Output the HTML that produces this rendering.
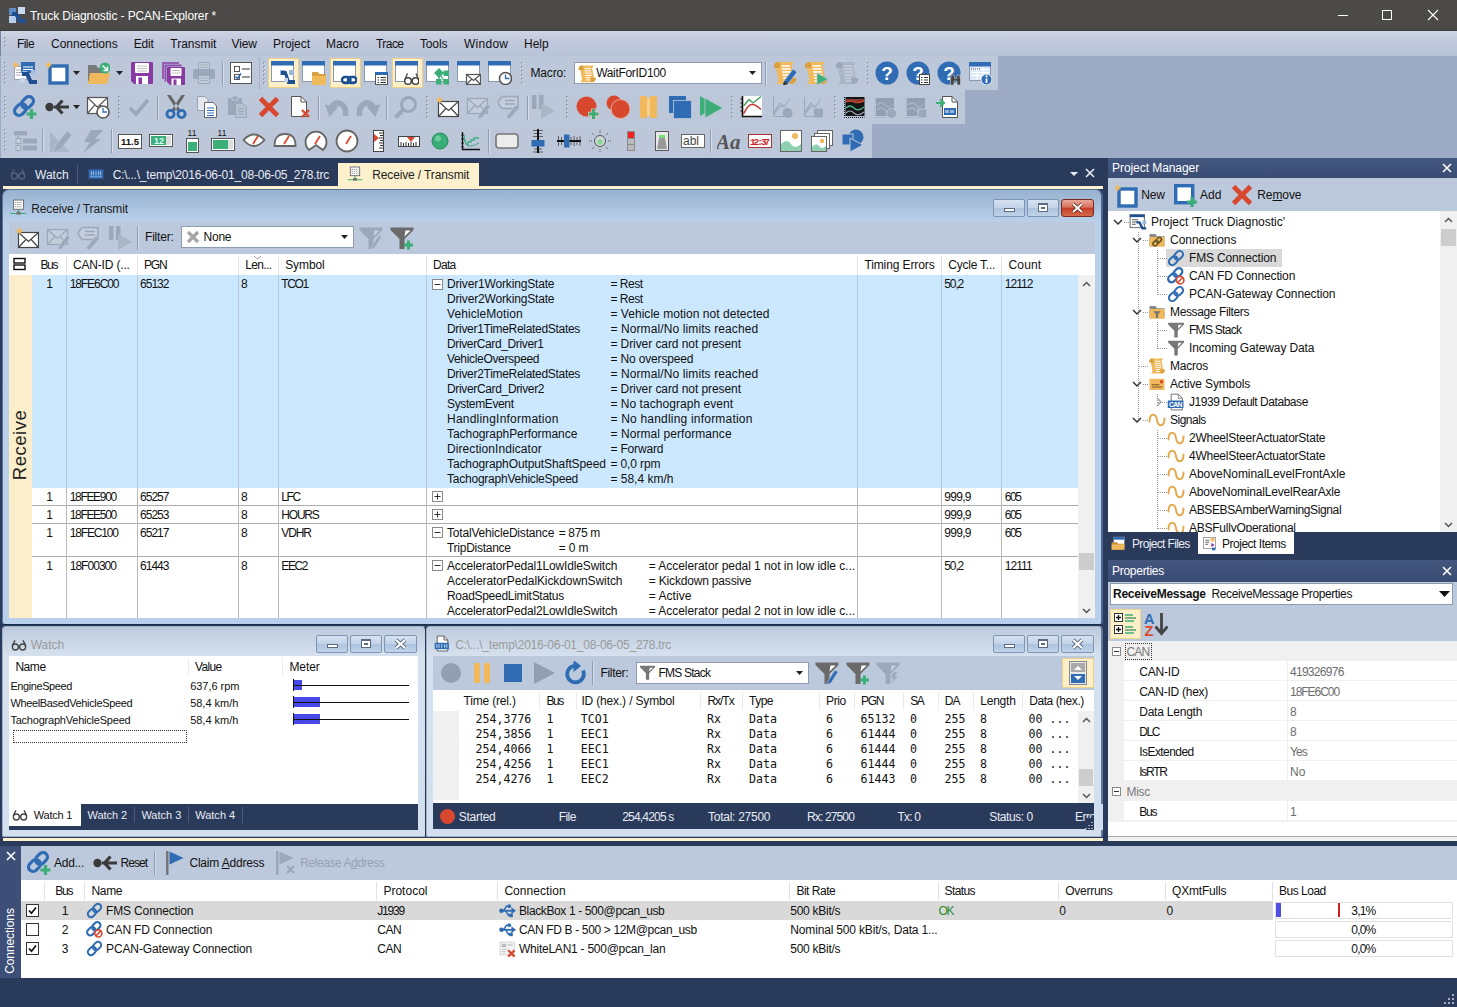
<!DOCTYPE html>
<html lang="en"><head><meta charset="utf-8"><title>Truck Diagnostic - PCAN-Explorer</title>
<style>
html,body{margin:0;padding:0}
body{width:1457px;height:1007px;overflow:hidden;position:relative;background:#2a3a5b;font-family:"Liberation Sans",sans-serif;font-size:12px;color:#111}
#app{position:absolute;left:0;top:0;width:1457px;height:1007px;overflow:hidden}
#app div,#app span,#app svg{position:absolute}
.t{white-space:pre;line-height:14px;font-size:12px}
.m{white-space:pre;line-height:14px;font-size:11.6px;font-family:"DejaVu Sans Mono","Liberation Mono",monospace}
u{text-decoration:underline}
</style></head>
<body><div id="app">
<div style="left:0px;top:0px;width:1457px;height:31px;background:linear-gradient(#4b4a48 0px,#4b4a48 27px,#404142 31px)"></div><svg style="left:9px;top:7px;" width="17" height="17" viewBox="0 0 17 17"><rect x="0" y="1" width="7" height="7" fill="#5f8cc9"/><rect x="9" y="0" width="7" height="7" fill="#c9d9f0"/><rect x="0" y="9" width="7" height="7" fill="#b9cdea"/><path d="M3 5H8L12 12H17V16H10L6 9H3Z" fill="#1d4f91"/></svg><span class="t" style="left:30.1px;top:9px;letter-spacing:-0.106px;color:#fff;">Truck Diagnostic - PCAN-Explorer *</span><svg style="left:1337px;top:9px;" width="12" height="12" viewBox="0 0 12 12"><path d="M1 6.5H11" stroke="#fff" stroke-width="1"/></svg><svg style="left:1381px;top:9px;" width="12" height="12" viewBox="0 0 12 12"><rect x="1.5" y="1.5" width="9" height="9" fill="none" stroke="#fff" stroke-width="1"/></svg><svg style="left:1427px;top:9px;" width="12" height="12" viewBox="0 0 12 12"><path d="M1 1L11 11M11 1L1 11" stroke="#fff" stroke-width="1.1"/></svg>
<div style="left:0px;top:31px;width:1457px;height:25px;background:linear-gradient(#cdd4e2 0%,#c3c9dd 40%,#b7c3d7 100%)"></div><div style="left:0px;top:31px;width:1px;height:127px;background:#7686a3"></div><svg style="left:4px;top:37px;" width="3" height="12" viewBox="0 0 3 12"><rect x="0" y="0" width="2" height="2" fill="#8d9bb3"/><rect x="1" y="1" width="1" height="1" fill="#e8eef6"/><rect x="0" y="4" width="2" height="2" fill="#8d9bb3"/><rect x="1" y="5" width="1" height="1" fill="#e8eef6"/><rect x="0" y="8" width="2" height="2" fill="#8d9bb3"/><rect x="1" y="9" width="1" height="1" fill="#e8eef6"/></svg><span class="t" style="left:17px;top:37px;letter-spacing:-0.578px;">File</span><span class="t" style="left:51px;top:37px;letter-spacing:-0.001px;">Connections</span><span class="t" style="left:133.7px;top:37px;letter-spacing:-0.193px;">Edit</span><span class="t" style="left:170.3px;top:37px;letter-spacing:-0.018px;">Transmit</span><span class="t" style="left:231.5px;top:37px;letter-spacing:-0.097px;">View</span><span class="t" style="left:273px;top:37px;letter-spacing:-0.058px;">Project</span><span class="t" style="left:326px;top:37px;letter-spacing:-0.085px;">Macro</span><span class="t" style="left:376px;top:37px;letter-spacing:-0.557px;">Trace</span><span class="t" style="left:420px;top:37px;letter-spacing:-0.153px;">Tools</span><span class="t" style="left:464px;top:37px;letter-spacing:0.264px;">Window</span><span class="t" style="left:524px;top:37px;letter-spacing:-0.026px;">Help</span>
<div style="left:0px;top:56px;width:1457px;height:102px;background:#9dabc5"></div><div style="left:1px;top:56px;width:997px;height:34px;background:#bcc7d9"></div><div style="left:1px;top:90px;width:964px;height:34px;background:linear-gradient(#c6d0e0 0px,#bcc7d9 1px)"></div><div style="left:1px;top:124px;width:871px;height:34px;background:linear-gradient(#c6d0e0 0px,#bcc7d9 1px)"></div><svg style="left:4px;top:62px;" width="3" height="24" viewBox="0 0 3 24"><rect x="0" y="0" width="2" height="2" fill="#8d9bb3"/><rect x="1" y="1" width="1" height="1" fill="#e8eef6"/><rect x="0" y="4" width="2" height="2" fill="#8d9bb3"/><rect x="1" y="5" width="1" height="1" fill="#e8eef6"/><rect x="0" y="8" width="2" height="2" fill="#8d9bb3"/><rect x="1" y="9" width="1" height="1" fill="#e8eef6"/><rect x="0" y="12" width="2" height="2" fill="#8d9bb3"/><rect x="1" y="13" width="1" height="1" fill="#e8eef6"/><rect x="0" y="16" width="2" height="2" fill="#8d9bb3"/><rect x="1" y="17" width="1" height="1" fill="#e8eef6"/><rect x="0" y="20" width="2" height="2" fill="#8d9bb3"/><rect x="1" y="21" width="1" height="1" fill="#e8eef6"/></svg><svg style="left:13px;top:61px;" width="24" height="24" viewBox="0 0 24 24"><rect x="1.500" y="5.500" width="12" height="13" fill="#fff" stroke="#9aa6b8"/><path d="M3 9H11M3 11.500H11M3 14H11" stroke="#99a" stroke-width=".800"/><rect x="8" y="1" width="14" height="11" fill="#2f6cb3"/><path d="M10 6H20M10 8.500H20" stroke="#fff" stroke-width="1.100"/><rect x="9" y="10" width="5" height="5" fill="#a9bfdf"/><rect x="18" y="9" width="5" height="5" fill="#a9bfdf"/><rect x="7" y="17" width="5" height="5" fill="#c5d4ea"/><path d="M9 11H15.500L19 19H24V23H16.500L13 15H9Z" fill="#1d4f91"/><circle cx="2.5" cy="4" r="2.300" fill="#f0b95c"/><path d="M-1.0 4H6.0M2.5 0.5V7.5" stroke="#f0b95c" stroke-width="1.200" opacity=".8"/></svg><svg style="left:46px;top:61px;" width="24" height="24" viewBox="0 0 24 24"><rect x="4" y="5" width="17" height="17" fill="#fff" stroke="#2f6cb3" stroke-width="3.400"/><circle cx="2.5" cy="4" r="2.300" fill="#f0b95c"/><path d="M-1.0 4H6.0M2.5 0.5V7.5" stroke="#f0b95c" stroke-width="1.200" opacity=".8"/></svg><svg style="left:86px;top:61px;" width="24" height="24" viewBox="0 0 24 24"><path d="M2 4H10L12 7H17V20H2Z" fill="#7a7a7a"/><path d="M4 12H24L21 23H2Z" fill="#f0b95c"/><circle cx="19" cy="7" r="5.500" fill="#3cae78"/><path d="M16.500 4.500L21 9M21.500 5.500V9.500H17.500" stroke="#fff" stroke-width="1.500" fill="none"/></svg><svg style="left:130px;top:61px;" width="24" height="24" viewBox="0 0 24 24"><path d="M1 2Q1 1 2 1H22Q23 1 23 2V22Q23 23 22 23H4L1 20Z" fill="#8a3aa3"/><rect x="5" y="2" width="14" height="10" rx="1" fill="#fff"/><path d="M7 5H17M7 7.500H17M7 10H17" stroke="#b9b9b9" stroke-width=".900"/><rect x="6" y="15" width="12" height="8" fill="#fff"/><rect x="8.500" y="16.500" width="3.500" height="6.500" fill="#8a3aa3"/></svg><svg style="left:161px;top:61px;" width="24" height="24" viewBox="0 0 24 24"><path d="M1 1H18V3H3V18H1Z" fill="#8a3aa3" opacity=".75"/><path d="M3.500 3.500H20.500V5.500H5.500V20.500H3.500Z" fill="#8a3aa3" opacity=".85"/><path d="M6 7Q6 6 7 6H23Q24 6 24 7V23Q24 24 23 24H9L6 21Z" fill="#8a3aa3"/><rect x="9.500" y="7" width="11" height="8" rx="1" fill="#fff"/><path d="M11 9.500H19M11 12H19" stroke="#b9b9b9" stroke-width=".900"/><rect x="10.500" y="17.500" width="9.500" height="6.500" fill="#fff"/><rect x="12.500" y="18.500" width="3" height="5.500" fill="#8a3aa3"/></svg><svg style="left:192px;top:61px;" width="24" height="24" viewBox="0 0 24 24"><rect x="6.500" y="1.500" width="11" height="8" fill="#c3ccda" stroke="#9ba8bb"/><path d="M8 4H16M8 6.500H16" stroke="#9ba8bb" stroke-width=".800"/><rect x="1" y="8" width="22" height="10" rx="2" fill="#9ba8bb"/><rect x="6.500" y="14.500" width="11" height="8" fill="#c3ccda" stroke="#9ba8bb"/><path d="M8 17H16M8 19.500H16" stroke="#9ba8bb" stroke-width=".800"/></svg><svg style="left:229px;top:61px;" width="24" height="24" viewBox="0 0 24 24"><rect x="1.500" y="1.500" width="21" height="21" fill="#fff" stroke="#555"/><rect x="5.500" y="5.500" width="5" height="5" fill="#fff" stroke="#555"/><path d="M13 8H21M13 16H21" stroke="#333" stroke-width="1.100"/><rect x="5.500" y="13.500" width="5" height="5" fill="#fff" stroke="#555"/><path d="M6.500 15.500L8.500 17.500L12 12.500" stroke="#2f6cb3" stroke-width="1.500" fill="none"/></svg><svg style="left:73px;top:71px;" width="7" height="4" viewBox="0 0 7 4"><path d="M0 0H7L3.5 4Z" fill="#222"/></svg><svg style="left:116px;top:71px;" width="7" height="4" viewBox="0 0 7 4"><path d="M0 0H7L3.5 4Z" fill="#222"/></svg><div style="left:222px;top:62px;width:1px;height:24px;background:#8f9db4"></div><div style="left:223px;top:62px;width:1px;height:24px;background:#d5dde9"></div><div style="left:259px;top:57px;width:1px;height:33px;background:#a5b2c8"></div><svg style="left:263px;top:62px;" width="3" height="24" viewBox="0 0 3 24"><rect x="0" y="0" width="2" height="2" fill="#8d9bb3"/><rect x="1" y="1" width="1" height="1" fill="#e8eef6"/><rect x="0" y="4" width="2" height="2" fill="#8d9bb3"/><rect x="1" y="5" width="1" height="1" fill="#e8eef6"/><rect x="0" y="8" width="2" height="2" fill="#8d9bb3"/><rect x="1" y="9" width="1" height="1" fill="#e8eef6"/><rect x="0" y="12" width="2" height="2" fill="#8d9bb3"/><rect x="1" y="13" width="1" height="1" fill="#e8eef6"/><rect x="0" y="16" width="2" height="2" fill="#8d9bb3"/><rect x="1" y="17" width="1" height="1" fill="#e8eef6"/><rect x="0" y="20" width="2" height="2" fill="#8d9bb3"/><rect x="1" y="21" width="1" height="1" fill="#e8eef6"/></svg><div style="left:268px;top:58px;width:31px;height:30px;background:#fdf0c8;border:1px solid #ecd08a;box-sizing:border-box"></div><svg style="left:271px;top:61px;" width="24" height="24" viewBox="0 0 24 24"><rect x="0.500" y="0.500" width="22" height="20" fill="#fff" stroke="#8a98ae"/><rect x="0" y="0" width="23" height="4.500" fill="#2f6cb3"/><rect x="9" y="9" width="5" height="5" fill="#9db5d8"/><path d="M10 10H15.500L18.500 19H24V23H16.500L13.500 14H10Z" fill="#1d4f91"/><rect x="18" y="9" width="5" height="5" fill="#9db5d8"/><rect x="13" y="17" width="4" height="4" fill="#c5d4ea"/></svg><svg style="left:302px;top:61px;" width="24" height="24" viewBox="0 0 24 24"><rect x="0.500" y="0.500" width="22" height="20" fill="#fff" stroke="#8a98ae"/><rect x="0" y="0" width="23" height="4.500" fill="#2f6cb3"/><path d="M10 11H16L17.500 13H24V24H10Z" fill="#d9a247"/><path d="M10 15H24V24H10Z" fill="#f0b95c"/></svg><div style="left:330px;top:58px;width:31px;height:30px;background:#fdf0c8;border:1px solid #ecd08a;box-sizing:border-box"></div><svg style="left:333px;top:61px;" width="24" height="24" viewBox="0 0 24 24"><rect x="0.500" y="0.500" width="22" height="20" fill="#fff" stroke="#8a98ae"/><rect x="0" y="0" width="23" height="4.500" fill="#2f6cb3"/><g fill="none" stroke="#1d4f91" stroke-width="2.400"><rect x="9" y="16" width="8.500" height="6" rx="3"/><rect x="15" y="16" width="8.500" height="6" rx="3"/></g></svg><svg style="left:364px;top:61px;" width="24" height="24" viewBox="0 0 24 24"><rect x="0.500" y="0.500" width="22" height="20" fill="#fff" stroke="#8a98ae"/><rect x="0" y="0" width="23" height="4.500" fill="#2f6cb3"/><rect x="11.500" y="11.500" width="12" height="12" fill="#fff" stroke="#555"/><rect x="11" y="11" width="13" height="3" fill="#2f6cb3"/><path d="M13.500 16.500H15M16.500 16.500H22M13.500 19H15M16.500 19H22M13.500 21.500H15M16.500 21.500H22" stroke="#333" stroke-width="1.200"/></svg><div style="left:392px;top:58px;width:31px;height:30px;background:#fdf0c8;border:1px solid #ecd08a;box-sizing:border-box"></div><svg style="left:395px;top:61px;" width="24" height="24" viewBox="0 0 24 24"><rect x="0.500" y="0.500" width="22" height="20" fill="#fff" stroke="#8a98ae"/><rect x="0" y="0" width="23" height="4.500" fill="#2f6cb3"/><circle cx="13" cy="20" r="3.300" fill="#fff" stroke="#444" stroke-width="1.500"/><circle cx="20.500" cy="20" r="3.300" fill="#fff" stroke="#444" stroke-width="1.500"/><path d="M10 18.500L12.500 12.500M23.500 18.500L21 12.500M16.200 19.500H17.300" stroke="#444" stroke-width="1.300" fill="none"/></svg><svg style="left:426px;top:61px;" width="24" height="24" viewBox="0 0 24 24"><rect x="0.500" y="0.500" width="22" height="20" fill="#fff" stroke="#8a98ae"/><rect x="0" y="0" width="23" height="4.500" fill="#2f6cb3"/><path d="M13 12V21M13 12L19 21M13 12H20" stroke="#3cae78" stroke-width="1.300"/><rect x="9.500" y="8.500" width="7" height="7" fill="#3cae78" transform="rotate(45 13 12)"/><rect x="17.500" y="9.500" width="5.500" height="5.500" fill="#3cae78"/><rect x="17.500" y="18" width="5.500" height="5.500" fill="#3cae78"/><rect x="10" y="18" width="5.500" height="5.500" fill="#3cae78"/></svg><svg style="left:457px;top:61px;" width="24" height="24" viewBox="0 0 24 24"><rect x="0.500" y="0.500" width="22" height="20" fill="#fff" stroke="#8a98ae"/><rect x="0" y="0" width="23" height="4.500" fill="#2f6cb3"/><rect x="9.5" y="13.5" width="14" height="10" fill="#fff" stroke="#555" stroke-width="1.2"/><path d="M9.5 13.5L16.5 19.5L23.5 13.5M9.5 23.5L14.82 18.0M23.5 23.5L18.18 18.0" fill="none" stroke="#555" stroke-width="1.2"/></svg><svg style="left:488px;top:61px;" width="24" height="24" viewBox="0 0 24 24"><rect x="0.500" y="0.500" width="22" height="20" fill="#fff" stroke="#8a98ae"/><rect x="0" y="0" width="23" height="4.500" fill="#2f6cb3"/><circle cx="17.5" cy="17.5" r="6" fill="#fff" stroke="#555" stroke-width="1.6"/><path d="M17.5 13.5V17.5H21.5" fill="none" stroke="#2f6cb3" stroke-width="1.3"/></svg><svg style="left:521px;top:62px;" width="3" height="24" viewBox="0 0 3 24"><rect x="0" y="0" width="2" height="2" fill="#8d9bb3"/><rect x="1" y="1" width="1" height="1" fill="#e8eef6"/><rect x="0" y="4" width="2" height="2" fill="#8d9bb3"/><rect x="1" y="5" width="1" height="1" fill="#e8eef6"/><rect x="0" y="8" width="2" height="2" fill="#8d9bb3"/><rect x="1" y="9" width="1" height="1" fill="#e8eef6"/><rect x="0" y="12" width="2" height="2" fill="#8d9bb3"/><rect x="1" y="13" width="1" height="1" fill="#e8eef6"/><rect x="0" y="16" width="2" height="2" fill="#8d9bb3"/><rect x="1" y="17" width="1" height="1" fill="#e8eef6"/><rect x="0" y="20" width="2" height="2" fill="#8d9bb3"/><rect x="1" y="21" width="1" height="1" fill="#e8eef6"/></svg><span class="t" style="left:530.5px;top:66px;letter-spacing:-0.175px;">Macro:</span><div style="left:574px;top:62px;width:188px;height:22px;background:#fff;border:1px solid #8e9bb0;box-sizing:border-box"></div><svg style="left:578px;top:64px;" width="24" height="24" viewBox="0 0 24 24"><g transform="scale(.760) translate(0,1)"><path d="M5 1H21Q18 3.500 19 7L21 17H23Q24 23 18 23H3Q6 20.500 5 17L3 7H1Q0 1 5 1Z" fill="#f0b95c"/><path d="M5 1Q8 2 7 7H1Q0 2 5 1ZM18 23Q16 22 17 17H23Q24 22 18 23Z" fill="#d9a040"/><path d="M8.500 5H17M8.500 8H17.500M9 11H18M9.500 14H18.500M10 17H16M10.500 20H16" stroke="#fff" stroke-width="1.300"/></g></svg><span class="t" style="left:596.2px;top:66px;letter-spacing:-0.316px;">WaitForID100</span><svg style="left:749px;top:71px;" width="7" height="4" viewBox="0 0 7 4"><path d="M0 0H7L3.5 4Z" fill="#222"/></svg><div style="left:765px;top:62px;width:1px;height:24px;background:#8f9db4"></div><div style="left:766px;top:62px;width:1px;height:24px;background:#d5dde9"></div><svg style="left:773px;top:61px;" width="24" height="24" viewBox="0 0 24 24"><path d="M5 1H21Q18 3.500 19 7L21 17H23Q24 23 18 23H3Q6 20.500 5 17L3 7H1Q0 1 5 1Z" fill="#f0b95c"/><path d="M5 1Q8 2 7 7H1Q0 2 5 1ZM18 23Q16 22 17 17H23Q24 22 18 23Z" fill="#d9a040"/><path d="M8.500 5H17M8.500 8H17.500M9 11H18M9.500 14H18.500M10 17H16M10.500 20H16" stroke="#fff" stroke-width="1.300"/><path d="M11 20L20 8L24 11L15 23L10 24.500Z" fill="#2f6cb3" stroke="#bcc8db" stroke-width=".700"/><path d="M10 24.500L11 20L15 23Z" fill="#333"/></svg><svg style="left:804px;top:61px;" width="24" height="24" viewBox="0 0 24 24"><path d="M5 1H21Q18 3.500 19 7L21 17H23Q24 23 18 23H3Q6 20.500 5 17L3 7H1Q0 1 5 1Z" fill="#f0b95c"/><path d="M5 1Q8 2 7 7H1Q0 2 5 1ZM18 23Q16 22 17 17H23Q24 22 18 23Z" fill="#d9a040"/><path d="M8.500 5H17M8.500 8H17.500M9 11H18M9.500 14H18.500M10 17H16M10.500 20H16" stroke="#fff" stroke-width="1.300"/><path d="M13 12L24 18L13 24Z" fill="#3cae78" stroke="#bcc8db" stroke-width=".700"/></svg><svg style="left:835px;top:61px;" width="24" height="24" viewBox="0 0 24 24"><path d="M5 1H21Q18 3.500 19 7L21 17H23Q24 23 18 23H3Q6 20.500 5 17L3 7H1Q0 1 5 1Z" fill="#aab5c6"/><path d="M5 1Q8 2 7 7H1Q0 2 5 1ZM18 23Q16 22 17 17H23Q24 22 18 23Z" fill="#9ba8bb"/><path d="M8.500 5H17M8.500 8H17.500M9 11H18M9.500 14H18.500M10 17H16M10.500 20H16" stroke="#c7d0de" stroke-width="1.300"/></svg><svg style="left:867px;top:62px;" width="3" height="24" viewBox="0 0 3 24"><rect x="0" y="0" width="2" height="2" fill="#8d9bb3"/><rect x="1" y="1" width="1" height="1" fill="#e8eef6"/><rect x="0" y="4" width="2" height="2" fill="#8d9bb3"/><rect x="1" y="5" width="1" height="1" fill="#e8eef6"/><rect x="0" y="8" width="2" height="2" fill="#8d9bb3"/><rect x="1" y="9" width="1" height="1" fill="#e8eef6"/><rect x="0" y="12" width="2" height="2" fill="#8d9bb3"/><rect x="1" y="13" width="1" height="1" fill="#e8eef6"/><rect x="0" y="16" width="2" height="2" fill="#8d9bb3"/><rect x="1" y="17" width="1" height="1" fill="#e8eef6"/><rect x="0" y="20" width="2" height="2" fill="#8d9bb3"/><rect x="1" y="21" width="1" height="1" fill="#e8eef6"/></svg><svg style="left:875px;top:61px;" width="24" height="24" viewBox="0 0 24 24"><circle cx="12" cy="12" r="11.500" fill="#2f6cb3"/><text x="12" y="19" font-family="Liberation Sans" font-weight="bold" font-size="19" fill="#fff" text-anchor="middle">?</text></svg><svg style="left:906px;top:61px;" width="24" height="24" viewBox="0 0 24 24"><circle cx="12" cy="12" r="11.500" fill="#2f6cb3"/><text x="12" y="19" font-family="Liberation Sans" font-weight="bold" font-size="19" fill="#fff" text-anchor="middle">?</text><rect x="13.500" y="13.500" width="10" height="10" fill="#fff" stroke="#444"/><path d="M15 16.500H16.500M18 16.500H22M15 19H16.500M18 19H22M15 21.500H16.500M18 21.500H22" stroke="#333"/></svg><svg style="left:937px;top:61px;" width="24" height="24" viewBox="0 0 24 24"><circle cx="12" cy="12" r="11.500" fill="#2f6cb3"/><text x="12" y="19" font-family="Liberation Sans" font-weight="bold" font-size="19" fill="#fff" text-anchor="middle">?</text><path d="M13.500 24V18L14.500 14H17L17.500 17.500H19.500L20 14H22.500L23.500 18V24H20V20H17V24Z" fill="#444" stroke="#ddd" stroke-width=".500"/></svg><svg style="left:968px;top:61px;" width="24" height="24" viewBox="0 0 24 24"><rect x="1.500" y="1.500" width="21" height="18" fill="#dce9f8" stroke="#8a98ae"/><rect x="1" y="1" width="22" height="4.500" fill="#2f6cb3"/><path d="M3 8.500H21M3 11.500H21M3 14.500H21M9 6V19M15 6V19" stroke="#fff"/><path d="M3 8H12" stroke="#556" stroke-dasharray="1 1"/><circle cx="18.500" cy="18.500" r="5.500" fill="#2f6cb3" stroke="#fff"/><path d="M18.500 17.500V22" stroke="#fff" stroke-width="1.800"/><circle cx="18.500" cy="15.300" r="1.100" fill="#fff"/></svg><svg style="left:4px;top:96px;" width="3" height="24" viewBox="0 0 3 24"><rect x="0" y="0" width="2" height="2" fill="#8d9bb3"/><rect x="1" y="1" width="1" height="1" fill="#e8eef6"/><rect x="0" y="4" width="2" height="2" fill="#8d9bb3"/><rect x="1" y="5" width="1" height="1" fill="#e8eef6"/><rect x="0" y="8" width="2" height="2" fill="#8d9bb3"/><rect x="1" y="9" width="1" height="1" fill="#e8eef6"/><rect x="0" y="12" width="2" height="2" fill="#8d9bb3"/><rect x="1" y="13" width="1" height="1" fill="#e8eef6"/><rect x="0" y="16" width="2" height="2" fill="#8d9bb3"/><rect x="1" y="17" width="1" height="1" fill="#e8eef6"/><rect x="0" y="20" width="2" height="2" fill="#8d9bb3"/><rect x="1" y="21" width="1" height="1" fill="#e8eef6"/></svg><svg style="left:13px;top:95px;" width="24" height="24" viewBox="0 0 24 24"><g transform="translate(-1,-1)"><g transform="rotate(-45 12 12)" fill="none" stroke="#2f6cb3" stroke-width="3.2"><rect x="0.500" y="7.500" width="13" height="9" rx="4.500"/><rect x="10.500" y="7.500" width="13" height="9" rx="4.500"/></g></g><path d="M13.5 19H23.5M18.5 14V24" stroke="#3cae78" stroke-width="3.2"/></svg><svg style="left:45px;top:95px;" width="24" height="24" viewBox="0 0 24 24"><circle cx="4.500" cy="12" r="4.200" fill="#3a3a3a"/><path d="M9 12H24M17.500 5.500L11.500 12L17.500 18.500" stroke="#3a3a3a" stroke-width="3.200" fill="none"/></svg><svg style="left:86px;top:95px;" width="24" height="24" viewBox="0 0 24 24"><rect x="1.5" y="2.5" width="20" height="16" fill="#fff" stroke="#555" stroke-width="1.2"/><path d="M1.5 2.5L11.5 12.1L21.5 2.5M1.5 18.5L9.1 9.7M21.5 18.5L13.9 9.7" fill="none" stroke="#555" stroke-width="1.2"/><circle cx="17" cy="17" r="6" fill="#fff" stroke="#555" stroke-width="1.6"/><path d="M17 13V17H21" fill="none" stroke="#2f6cb3" stroke-width="1.3"/></svg><svg style="left:73px;top:105px;" width="7" height="4" viewBox="0 0 7 4"><path d="M0 0H7L3.5 4Z" fill="#222"/></svg><svg style="left:118px;top:96px;" width="3" height="24" viewBox="0 0 3 24"><rect x="0" y="0" width="2" height="2" fill="#8d9bb3"/><rect x="1" y="1" width="1" height="1" fill="#e8eef6"/><rect x="0" y="4" width="2" height="2" fill="#8d9bb3"/><rect x="1" y="5" width="1" height="1" fill="#e8eef6"/><rect x="0" y="8" width="2" height="2" fill="#8d9bb3"/><rect x="1" y="9" width="1" height="1" fill="#e8eef6"/><rect x="0" y="12" width="2" height="2" fill="#8d9bb3"/><rect x="1" y="13" width="1" height="1" fill="#e8eef6"/><rect x="0" y="16" width="2" height="2" fill="#8d9bb3"/><rect x="1" y="17" width="1" height="1" fill="#e8eef6"/><rect x="0" y="20" width="2" height="2" fill="#8d9bb3"/><rect x="1" y="21" width="1" height="1" fill="#e8eef6"/></svg><svg style="left:127px;top:95px;" width="24" height="24" viewBox="0 0 24 24"><path d="M3 13L9 19L21 5" stroke="#9ba8bb" stroke-width="3.600" fill="none"/></svg><svg style="left:164px;top:95px;" width="24" height="24" viewBox="0 0 24 24"><path d="M3 0H6.500L16.500 15L13.500 16.500ZM21 0H17.500L7.500 15L10.500 16.500Z" fill="#666"/><circle cx="6.500" cy="19" r="3.600" fill="none" stroke="#2f6cb3" stroke-width="2.800"/><circle cx="17.500" cy="19" r="3.600" fill="none" stroke="#2f6cb3" stroke-width="2.800"/></svg><svg style="left:195px;top:95px;" width="24" height="24" viewBox="0 0 24 24"><path d="M2.5 1.5H10L13 4.5V15.500H2.5Z" fill="#e4e8ee" stroke="#9aa4b4"/><path d="M9.500 7.500H18L21.500 11V22.500H9.500Z" fill="#fff" stroke="#666"/><path d="M12 13H19M12 15.500H19M12 18H19M12 20.500H19" stroke="#2f6cb3" stroke-width="1.1"/></svg><svg style="left:226px;top:95px;" width="24" height="24" viewBox="0 0 24 24"><rect x="2" y="3" width="14" height="17" fill="#9ba8bb"/><rect x="6" y="1" width="6" height="4" fill="#9ba8bb" stroke="#bcc8db"/><path d="M9.500 8.500H17L20.500 12V22.500H9.500Z" fill="#b6c1d1" stroke="#9ba8bb"/><path d="M12 14H18M12 16.500H18M12 19H18" stroke="#9ba8bb"/></svg><svg style="left:257px;top:95px;" width="24" height="24" viewBox="0 0 24 24"><path d="M3.500 3.500L20.500 20.500M20.500 3.500L3.500 20.500" stroke="#d8482e" stroke-width="4.800"/></svg><svg style="left:288px;top:95px;" width="24" height="24" viewBox="0 0 24 24"><path d="M3.500 1.500H13L18.500 7V21.500H3.500Z" fill="#fff" stroke="#555"/><path d="M13 1.500V7H18.500" fill="none" stroke="#555"/><path d="M14 15L21 22M21 15L14 22" stroke="#d8482e" stroke-width="2.4"/></svg><svg style="left:325px;top:95px;" width="24" height="24" viewBox="0 0 24 24"><path d="M20.500 21C22 7 9.500 4.500 7 12" fill="none" stroke="#9ba8bb" stroke-width="5.500"/><path d="M0 9.500L13.500 11.500L4.500 22Z" fill="#9ba8bb"/></svg><svg style="left:356px;top:95px;" width="24" height="24" viewBox="0 0 24 24"><path d="M3.500 21C2 7 14.500 4.500 17 12" fill="none" stroke="#9ba8bb" stroke-width="5.500"/><path d="M24 9.500L10.500 11.500L19.500 22Z" fill="#9ba8bb"/></svg><svg style="left:393px;top:95px;" width="24" height="24" viewBox="0 0 24 24"><circle cx="15.500" cy="9.500" r="7" fill="none" stroke="#9ba8bb" stroke-width="3"/><path d="M10.500 14.500L2.500 22.500" stroke="#9ba8bb" stroke-width="4"/></svg><div style="left:157px;top:96px;width:1px;height:24px;background:#8f9db4"></div><div style="left:158px;top:96px;width:1px;height:24px;background:#d5dde9"></div><div style="left:318px;top:96px;width:1px;height:24px;background:#8f9db4"></div><div style="left:319px;top:96px;width:1px;height:24px;background:#d5dde9"></div><div style="left:386px;top:96px;width:1px;height:24px;background:#8f9db4"></div><div style="left:387px;top:96px;width:1px;height:24px;background:#d5dde9"></div><svg style="left:426px;top:96px;" width="3" height="24" viewBox="0 0 3 24"><rect x="0" y="0" width="2" height="2" fill="#8d9bb3"/><rect x="1" y="1" width="1" height="1" fill="#e8eef6"/><rect x="0" y="4" width="2" height="2" fill="#8d9bb3"/><rect x="1" y="5" width="1" height="1" fill="#e8eef6"/><rect x="0" y="8" width="2" height="2" fill="#8d9bb3"/><rect x="1" y="9" width="1" height="1" fill="#e8eef6"/><rect x="0" y="12" width="2" height="2" fill="#8d9bb3"/><rect x="1" y="13" width="1" height="1" fill="#e8eef6"/><rect x="0" y="16" width="2" height="2" fill="#8d9bb3"/><rect x="1" y="17" width="1" height="1" fill="#e8eef6"/><rect x="0" y="20" width="2" height="2" fill="#8d9bb3"/><rect x="1" y="21" width="1" height="1" fill="#e8eef6"/></svg><svg style="left:435px;top:95px;" width="24" height="24" viewBox="0 0 24 24"><rect x="3.5" y="6.5" width="20" height="15" fill="#fff" stroke="#444" stroke-width="1.2"/><path d="M3.5 6.5L13.5 15.5L23.5 6.5M3.5 21.5L11.1 13.25M23.5 21.5L15.9 13.25" fill="none" stroke="#444" stroke-width="1.2"/><circle cx="4.5" cy="5" r="2.300" fill="#f0b95c"/><path d="M1.0 5H8.0M4.5 1.5V8.5" stroke="#f0b95c" stroke-width="1.200" opacity=".8"/></svg><svg style="left:466px;top:95px;" width="24" height="24" viewBox="0 0 24 24"><rect x="1.5" y="3.5" width="20" height="15" fill="#c3cddc" stroke="#9ba8bb" stroke-width="1.2"/><path d="M1.5 3.5L11.5 12.5L21.5 3.5M1.5 18.5L9.1 10.25M21.5 18.5L13.9 10.25" fill="none" stroke="#9ba8bb" stroke-width="1.2"/><path d="M13 20L21 9L24 11.500L16 22.500L12 24Z" fill="#9ba8bb" stroke="#bcc8db" stroke-width=".600"/></svg><svg style="left:497px;top:95px;" width="24" height="24" viewBox="0 0 24 24"><path d="M1.500 6L5 1.500H21V13.500H5L1.500 9Z" fill="#c3cddc" stroke="#9ba8bb" stroke-width="1.600"/><path d="M8 5.500H18M8 9H18" stroke="#9ba8bb" stroke-width="1.300"/><path d="M9 22L19 10L22.500 12.500L12.500 24Z" fill="#9ba8bb" stroke="#bcc8db" stroke-width=".600"/></svg><svg style="left:531px;top:95px;" width="24" height="24" viewBox="0 0 24 24"><rect x="1" y="0" width="4.500" height="14" fill="#9ba8bb"/><rect x="8" y="0" width="4.500" height="14" fill="#9ba8bb"/><path d="M10 8L24 16L10 24Z" fill="#aab5c6"/></svg><div style="left:527px;top:96px;width:1px;height:24px;background:#8f9db4"></div><div style="left:528px;top:96px;width:1px;height:24px;background:#d5dde9"></div><svg style="left:566px;top:96px;" width="3" height="24" viewBox="0 0 3 24"><rect x="0" y="0" width="2" height="2" fill="#8d9bb3"/><rect x="1" y="1" width="1" height="1" fill="#e8eef6"/><rect x="0" y="4" width="2" height="2" fill="#8d9bb3"/><rect x="1" y="5" width="1" height="1" fill="#e8eef6"/><rect x="0" y="8" width="2" height="2" fill="#8d9bb3"/><rect x="1" y="9" width="1" height="1" fill="#e8eef6"/><rect x="0" y="12" width="2" height="2" fill="#8d9bb3"/><rect x="1" y="13" width="1" height="1" fill="#e8eef6"/><rect x="0" y="16" width="2" height="2" fill="#8d9bb3"/><rect x="1" y="17" width="1" height="1" fill="#e8eef6"/><rect x="0" y="20" width="2" height="2" fill="#8d9bb3"/><rect x="1" y="21" width="1" height="1" fill="#e8eef6"/></svg><svg style="left:575px;top:95px;" width="24" height="24" viewBox="0 0 24 24"><circle cx="11.500" cy="11.500" r="10" fill="#d8482e"/><path d="M13 19H24M18.500 13.500V24.500" stroke="#f3c9bf" stroke-width="4.600"/><path d="M13.5 19H23.5M18.5 14V24" stroke="#3cae78" stroke-width="3.2"/></svg><svg style="left:606px;top:95px;" width="24" height="24" viewBox="0 0 24 24"><circle cx="8" cy="8" r="7.500" fill="#d8482e"/><circle cx="14.500" cy="14" r="9.500" fill="#d8482e" stroke="#eab3a6" stroke-width=".900"/></svg><svg style="left:637px;top:95px;" width="24" height="24" viewBox="0 0 24 24"><rect x="3" y="1" width="7" height="22" rx="1" fill="#f0b95c"/><rect x="13" y="1" width="7" height="22" rx="1" fill="#f0b95c"/><rect x="10" y="3" width="3" height="18" fill="#f5cf8d"/></svg><svg style="left:668px;top:95px;" width="24" height="24" viewBox="0 0 24 24"><rect x="1" y="1" width="17" height="17" fill="#2f6cb3"/><rect x="5.500" y="5.500" width="18" height="18" fill="#2f6cb3" stroke="#bcc8db" stroke-width=".800"/></svg><svg style="left:699px;top:95px;" width="24" height="24" viewBox="0 0 24 24"><path d="M1 1L18 11L1 21Z" fill="#3cae78"/><path d="M6 3L24 13L6 23Z" fill="#3cae78" stroke="#bcc8db" stroke-width=".800"/></svg><svg style="left:731px;top:96px;" width="3" height="24" viewBox="0 0 3 24"><rect x="0" y="0" width="2" height="2" fill="#8d9bb3"/><rect x="1" y="1" width="1" height="1" fill="#e8eef6"/><rect x="0" y="4" width="2" height="2" fill="#8d9bb3"/><rect x="1" y="5" width="1" height="1" fill="#e8eef6"/><rect x="0" y="8" width="2" height="2" fill="#8d9bb3"/><rect x="1" y="9" width="1" height="1" fill="#e8eef6"/><rect x="0" y="12" width="2" height="2" fill="#8d9bb3"/><rect x="1" y="13" width="1" height="1" fill="#e8eef6"/><rect x="0" y="16" width="2" height="2" fill="#8d9bb3"/><rect x="1" y="17" width="1" height="1" fill="#e8eef6"/><rect x="0" y="20" width="2" height="2" fill="#8d9bb3"/><rect x="1" y="21" width="1" height="1" fill="#e8eef6"/></svg><svg style="left:739px;top:95px;" width="24" height="24" viewBox="0 0 24 24"><rect x="3" y="1" width="20" height="20" fill="#fff"/><path d="M3.500 1V21.500H23" fill="none" stroke="#111" stroke-width="1.600"/><path d="M1.500 4H4M1.500 8H4M1.500 12H4M1.500 16H4" stroke="#111"/><path d="M4.500 11L10 4.500L14 8L22 1.500" fill="none" stroke="#3a9a55" stroke-width="1.300"/><path d="M4.500 19Q9 9.500 13 9.500Q17 9.500 22 14.500" fill="none" stroke="#c9403a" stroke-width="1.700"/></svg><svg style="left:770px;top:95px;" width="24" height="24" viewBox="0 0 24 24"><path d="M3.500 2V21.500H22" fill="none" stroke="#9ba8bb"/><path d="M4 17L10 8L14 12L20 4M4 20Q9 10 13 11" fill="none" stroke="#9ba8bb" stroke-width="1.100"/><circle cx="17.500" cy="18" r="5" fill="#9ba8bb"/></svg><svg style="left:801px;top:95px;" width="24" height="24" viewBox="0 0 24 24"><path d="M3.500 2V21.500H22" fill="none" stroke="#9ba8bb"/><path d="M4 17L10 8L14 12L20 4M4 20Q9 10 13 11" fill="none" stroke="#9ba8bb" stroke-width="1.100"/><rect x="13" y="13.500" width="9" height="9" fill="#9ba8bb"/></svg><svg style="left:834px;top:96px;" width="3" height="24" viewBox="0 0 3 24"><rect x="0" y="0" width="2" height="2" fill="#8d9bb3"/><rect x="1" y="1" width="1" height="1" fill="#e8eef6"/><rect x="0" y="4" width="2" height="2" fill="#8d9bb3"/><rect x="1" y="5" width="1" height="1" fill="#e8eef6"/><rect x="0" y="8" width="2" height="2" fill="#8d9bb3"/><rect x="1" y="9" width="1" height="1" fill="#e8eef6"/><rect x="0" y="12" width="2" height="2" fill="#8d9bb3"/><rect x="1" y="13" width="1" height="1" fill="#e8eef6"/><rect x="0" y="16" width="2" height="2" fill="#8d9bb3"/><rect x="1" y="17" width="1" height="1" fill="#e8eef6"/><rect x="0" y="20" width="2" height="2" fill="#8d9bb3"/><rect x="1" y="21" width="1" height="1" fill="#e8eef6"/></svg><svg style="left:842px;top:95px;" width="24" height="24" viewBox="0 0 24 24"><rect x="3.500" y="2" width="19" height="19" fill="#151515"/><path d="M2.500 2V22.500H22.500" fill="none" stroke="#111" stroke-dasharray="1 1"/><path d="M4 5.500H22" stroke="#8a3a30" stroke-width="3"/><path d="M4 7Q8 5 12 7T22 6" fill="none" stroke="#d8482e" stroke-width="1.100"/><path d="M4 13Q8 9 12 13T22 12" fill="none" stroke="#4dbb8a" stroke-width="1.200"/><path d="M4 18Q8 14 12 18T22 17" fill="none" stroke="#9ab" stroke-width="1.100"/></svg><svg style="left:873px;top:95px;" width="24" height="24" viewBox="0 0 24 24"><rect x="3" y="3" width="18" height="18" fill="#929eb2"/><path d="M4 10Q8 6 12 10T20 9M4 15Q8 11 12 15T20 14" fill="none" stroke="#a9b4c5" stroke-width="1.200"/><path d="M2 2V22.500H22" fill="none" stroke="#9ba8bb" stroke-dasharray="1 1"/><circle cx="18.500" cy="18.500" r="5" fill="#9ba8bb" stroke="#bcc8db"/></svg><svg style="left:904px;top:95px;" width="24" height="24" viewBox="0 0 24 24"><rect x="3" y="3" width="18" height="18" fill="#929eb2"/><path d="M4 10Q8 6 12 10T20 9M4 15Q8 11 12 15T20 14" fill="none" stroke="#a9b4c5" stroke-width="1.200"/><path d="M2 2V22.500H22" fill="none" stroke="#9ba8bb" stroke-dasharray="1 1"/><rect x="14" y="14" width="9" height="9" fill="#9ba8bb" stroke="#bcc8db"/></svg><svg style="left:935px;top:95px;" width="24" height="24" viewBox="0 0 24 24"><path d="M7.500 1.500H17L22.500 7V22.500H7.500Z" fill="#fff" stroke="#555"/><path d="M17 1.500V7H22.500" fill="none" stroke="#555"/><rect x="9" y="13" width="12" height="7" fill="#2f6cb3"/><path d="M11 15V18M13 15V18M16 15V18M18 15V18" stroke="#fff"/><path d="M1 8H8M5 4.500L9 8L5 11.500" stroke="#3cae78" stroke-width="2.2" fill="none"/></svg><svg style="left:4px;top:129px;" width="3" height="24" viewBox="0 0 3 24"><rect x="0" y="0" width="2" height="2" fill="#8d9bb3"/><rect x="1" y="1" width="1" height="1" fill="#e8eef6"/><rect x="0" y="4" width="2" height="2" fill="#8d9bb3"/><rect x="1" y="5" width="1" height="1" fill="#e8eef6"/><rect x="0" y="8" width="2" height="2" fill="#8d9bb3"/><rect x="1" y="9" width="1" height="1" fill="#e8eef6"/><rect x="0" y="12" width="2" height="2" fill="#8d9bb3"/><rect x="1" y="13" width="1" height="1" fill="#e8eef6"/><rect x="0" y="16" width="2" height="2" fill="#8d9bb3"/><rect x="1" y="17" width="1" height="1" fill="#e8eef6"/><rect x="0" y="20" width="2" height="2" fill="#8d9bb3"/><rect x="1" y="21" width="1" height="1" fill="#e8eef6"/></svg><svg style="left:13px;top:129px;" width="24" height="24" viewBox="0 0 24 24"><rect x="1" y="2" width="13" height="4.500" fill="#9ba8bb"/><path d="M5 6V19H8M5 12H8" stroke="#9ba8bb" fill="none" stroke-width="1.200"/><rect x="3" y="9.500" width="5" height="5" fill="#c3cddc" stroke="#9ba8bb"/><rect x="3" y="16.500" width="5" height="5" fill="#c3cddc" stroke="#9ba8bb"/><rect x="10" y="9.500" width="14" height="5" fill="#9ba8bb"/><rect x="10" y="16.500" width="14" height="5" fill="#9ba8bb"/></svg><div style="left:42px;top:129px;width:1px;height:24px;background:#8f9db4"></div><div style="left:43px;top:129px;width:1px;height:24px;background:#d5dde9"></div><svg style="left:49px;top:129px;" width="24" height="24" viewBox="0 0 24 24"><path d="M1 3V23H21Z" fill="#aab5c7"/><path d="M6 17L18 2L23 6L11 21L4 23.500Z" fill="#9ba8bb" stroke="#bcc8db" stroke-width=".800"/></svg><svg style="left:80px;top:129px;" width="24" height="24" viewBox="0 0 24 24"><path d="M11 1H23L15 10H21L3 24L10 13H4Z" fill="#9ba8bb"/></svg><div style="left:111px;top:129px;width:1px;height:24px;background:#8f9db4"></div><div style="left:112px;top:129px;width:1px;height:24px;background:#d5dde9"></div><svg style="left:118px;top:129px;" width="24" height="24" viewBox="0 0 24 24"><rect x="0.500" y="5.500" width="23" height="14" fill="#fff" stroke="#555"/><text x="12" y="16" font-family="Liberation Sans" font-weight="bold" font-size="9.500" text-anchor="middle" fill="#111">11.5</text></svg><svg style="left:149px;top:129px;" width="24" height="24" viewBox="0 0 24 24"><rect x="0.500" y="5.500" width="23" height="12" fill="#fff" stroke="#555"/><rect x="2" y="7" width="15" height="9" fill="#3cae78"/><rect x="17" y="7" width="5" height="9" fill="#ddd"/><text x="10" y="15" font-family="Liberation Sans" font-weight="bold" font-size="9" text-anchor="middle" fill="#dff">12</text></svg><svg style="left:180px;top:129px;" width="24" height="24" viewBox="0 0 24 24"><text x="12" y="7" font-family="Liberation Sans" font-size="8.500" text-anchor="middle" fill="#111">11</text><rect x="6.500" y="9.500" width="12" height="14" fill="#fff" stroke="#555"/><rect x="8" y="13" width="9" height="9" fill="#3cae78"/></svg><svg style="left:211px;top:129px;" width="24" height="24" viewBox="0 0 24 24"><text x="11" y="7" font-family="Liberation Sans" font-size="8.500" text-anchor="middle" fill="#111">11</text><rect x="0.500" y="9.500" width="23" height="12" fill="#fff" stroke="#555"/><rect x="2" y="11" width="15" height="9" fill="#3cae78"/><rect x="17" y="11" width="5" height="9" fill="#ddd"/></svg><svg style="left:242px;top:129px;" width="24" height="24" viewBox="0 0 24 24"><path d="M1.500 11Q12 0 22.500 11Q12 23 1.500 11Z" fill="#fff" stroke="#666" stroke-width="1.8"/><path d="M11 15L16 7" stroke="#d8482e" stroke-width="1.8"/></svg><svg style="left:273px;top:129px;" width="24" height="24" viewBox="0 0 24 24"><path d="M1.500 17Q1.500 5 12 5Q22.500 5 22.500 17Z" fill="#fff" stroke="#666" stroke-width="1.8"/><path d="M11 15L16 7" stroke="#d8482e" stroke-width="1.8"/></svg><svg style="left:304px;top:129px;" width="24" height="24" viewBox="0 0 24 24"><path d="M5 21A10.500 10.500 0 1 1 19 21L12 16Z" fill="#fff" stroke="#666" stroke-width="1.800"/><path d="M11 15L16 7" stroke="#d8482e" stroke-width="1.8"/></svg><svg style="left:335px;top:129px;" width="24" height="24" viewBox="0 0 24 24"><circle cx="12" cy="12" r="10.500" fill="#fff" stroke="#666" stroke-width="1.8"/><path d="M11 15L16 7" stroke="#d8482e" stroke-width="1.8"/></svg><svg style="left:366px;top:129px;" width="24" height="24" viewBox="0 0 24 24"><rect x="7.500" y="1.500" width="10" height="21" fill="#fff" stroke="#444"/><path d="M13 4H17M14 6.500H17M13 9H17M14 11.500H17M13 14H17M14 16.500H17M13 19H17" stroke="#333"/><path d="M8 5L13 9L8 13Z" fill="#d8482e"/></svg><svg style="left:397px;top:129px;" width="24" height="24" viewBox="0 0 24 24"><rect x="1.500" y="7.500" width="21" height="10" fill="#fff" stroke="#444"/><path d="M4 13V17M6.500 14V17M9 13V17M11.500 14V17M14 13V17M16.500 14V17M19 13V17" stroke="#333"/><path d="M10 8L14 13L18 8Z" fill="#d8482e"/></svg><svg style="left:428px;top:129px;" width="24" height="24" viewBox="0 0 24 24"><circle cx="12" cy="12" r="8" fill="#3cae78" stroke="#2a8a5c"/><circle cx="10" cy="9.500" r="3" fill="#7fd9ae" opacity=".7"/></svg><svg style="left:459px;top:129px;" width="24" height="24" viewBox="0 0 24 24"><path d="M3.500 3V20.500H21" fill="none" stroke="#111" stroke-width="1.3"/><path d="M5 6Q6 16 9 16V13H12V11H15V9H20" fill="none" stroke="#3cae78" stroke-width="1.3"/><path d="M5 9Q7 18 12 17T20 14" fill="none" stroke="#4a8" stroke-width="1"/><path d="M2 6H5M2 10H5M2 14H5M2 18H5" stroke="#111" stroke-width=".8"/></svg><div style="left:488px;top:129px;width:1px;height:24px;background:#8f9db4"></div><div style="left:489px;top:129px;width:1px;height:24px;background:#d5dde9"></div><svg style="left:495px;top:129px;" width="24" height="24" viewBox="0 0 24 24"><rect x="1" y="5" width="22" height="14" rx="3" fill="#ececec" stroke="#777" stroke-width="1.6"/></svg><svg style="left:526px;top:129px;" width="24" height="24" viewBox="0 0 24 24"><path d="M7 1.500H17M8 4.500H16M7 7.500H17M8 20H16M7 23H17" stroke="#555" stroke-width=".900"/><path d="M12 0V24" stroke="#111" stroke-width="2"/><rect x="5.500" y="11" width="13" height="6.500" fill="#2f6cb3"/></svg><svg style="left:557px;top:129px;" width="24" height="24" viewBox="0 0 24 24"><path d="M1.500 7V17M4.500 8V16M14 8V16M17 7V17M20 8V16M23 7V17" stroke="#555" stroke-width=".900"/><path d="M0 12H24" stroke="#111" stroke-width="2"/><rect x="7" y="5.500" width="5.500" height="13" fill="#2f6cb3"/></svg><svg style="left:588px;top:129px;" width="24" height="24" viewBox="0 0 24 24"><circle cx="12" cy="12" r="5.500" fill="#cfd4d8" stroke="#555"/><circle cx="12" cy="13" r="2.500" fill="#7fd98a"/><path d="M12 1V4M12 20V23M1 12H4M20 12H23M4 4L6.500 6.500M20 4L17.500 6.500M4 20L6.500 17.500M20 20L17.500 17.500" stroke="#555" stroke-dasharray="1 1"/></svg><svg style="left:619px;top:129px;" width="24" height="24" viewBox="0 0 24 24"><rect x="8" y="2" width="8" height="20" fill="#8c8c8c"/><rect x="9" y="3" width="6" height="6" fill="#e22"/><rect x="9" y="10" width="6" height="5" fill="#bbb"/><rect x="9" y="16" width="6" height="5" fill="#bbb"/></svg><svg style="left:650px;top:129px;" width="24" height="24" viewBox="0 0 24 24"><rect x="5.500" y="2.500" width="13" height="19" fill="#e8e8e8" stroke="#555"/><path d="M7 20L9 9H15L17 20Z" fill="#999"/><rect x="9" y="6" width="6" height="3" fill="#7d7"/></svg><svg style="left:681px;top:129px;" width="24" height="24" viewBox="0 0 24 24"><rect x="0.500" y="5.500" width="23" height="13" fill="#fff" stroke="#666"/><text x="2" y="16" font-family="Liberation Sans" font-size="12" fill="#444">abl</text></svg><div style="left:710px;top:129px;width:1px;height:24px;background:#8f9db4"></div><div style="left:711px;top:129px;width:1px;height:24px;background:#d5dde9"></div><svg style="left:717px;top:129px;" width="24" height="24" viewBox="0 0 24 24"><text x="-1" y="20" font-family="Liberation Serif" font-style="italic" font-weight="bold" font-size="21" fill="#555">Aa</text></svg><svg style="left:748px;top:129px;" width="24" height="24" viewBox="0 0 24 24"><rect x="0.500" y="5.500" width="23" height="13" fill="#fff" stroke="#a33"/><text x="12" y="16" font-family="Liberation Mono" font-weight="bold" font-size="9.500" text-anchor="middle" fill="#c22" textLength="20">12:37</text></svg><svg style="left:779px;top:129px;" width="24" height="24" viewBox="0 0 24 24"><rect x="1.500" y="1.500" width="21" height="21" fill="#fff" stroke="#666"/><circle cx="16" cy="7" r="3" fill="#f0b95c"/><path d="M2 15Q8 9 12 15T22 15V22H2Z" fill="#8fd0b0"/></svg><svg style="left:810px;top:129px;" width="24" height="24" viewBox="0 0 24 24"><rect x="7.500" y="1.500" width="15" height="15" fill="#fff" stroke="#666"/><rect x="4.500" y="4.500" width="15" height="15" fill="#fff" stroke="#666"/><rect x="1.500" y="7.500" width="15" height="15" fill="#fff" stroke="#666"/><circle cx="12" cy="12" r="2.200" fill="#f0b95c"/><path d="M2 18Q6 13 9 17T16 17V22H2Z" fill="#8fd0b0"/></svg><svg style="left:841px;top:129px;" width="24" height="24" viewBox="0 0 24 24"><circle cx="15" cy="8" r="7.500" fill="#2f6cb3"/><rect x="1" y="5" width="11" height="11" fill="#2f6cb3" stroke="#bcc8db"/><path d="M9 9L22 16L9 23Z" fill="#2f6cb3" stroke="#bcc8db"/></svg>
<div style="left:0px;top:158px;width:1108px;height:31px;background:#2a3a5b"></div><div style="left:3px;top:186px;width:1100px;height:3px;background:#fdf0cc"></div><svg style="left:10px;top:166px;" width="16" height="16" viewBox="0 0 24 24"><circle cx="6.500" cy="15" r="4.500" fill="none" stroke="#55607a" stroke-width="2"/><circle cx="17.500" cy="15" r="4.500" fill="none" stroke="#55607a" stroke-width="2"/><path d="M2 13L6 5M22 13L18 5M11 14H13" stroke="#55607a" stroke-width="2" fill="none"/></svg><span class="t" style="left:35px;top:168px;letter-spacing:0.009px;color:#e8ecf4;">Watch</span><div style="left:77px;top:164px;width:1px;height:20px;background:#4a5a7c"></div><svg style="left:88px;top:166px;" width="16" height="16" viewBox="0 0 24 24"><rect x="1" y="5" width="22" height="14" fill="#2f6cb3"/><path d="M5 8V14M8 8V14M12 8V14M16 8V14M19 8V14" stroke="#9fc0ea" stroke-width="1.5"/><path d="M3 16H21" stroke="#9fc0ea"/></svg><span class="t" style="left:112.7px;top:168px;letter-spacing:-0.213px;color:#e8ecf4;">C:\...\_temp\2016-06-01_08-06-05_278.trc</span><div style="left:338px;top:163px;width:141px;height:26px;background:#fdf0cc"></div><svg style="left:347px;top:166px;" width="16" height="16" viewBox="0 0 24 24"><rect x="5" y="1.500" width="14" height="13" fill="#fff" stroke="#666" stroke-width="1.3"/><path d="M7 5H17M7 8H17M7 11H17" stroke="#666" stroke-dasharray="2 1"/><path d="M12 15V20M1 20.500H23" stroke="#3cae78" stroke-width="1.600"/><rect x="9" y="18" width="6" height="4" fill="#777"/></svg><span class="t" style="left:372.2px;top:168px;letter-spacing:-0.127px;color:#222;">Receive / Transmit</span><svg style="left:1069px;top:170px;" width="10" height="8" viewBox="0 0 10 8"><path d="M1 2H9L5 6Z" fill="#e8ecf4"/></svg><svg style="left:1084px;top:167px;" width="12" height="12" viewBox="0 0 12 12"><path d="M2 2L10 10M10 2L2 10" stroke="#e8ecf4" stroke-width="1.6"/></svg>
<div style="left:2px;top:189px;width:1101px;height:436px;background:linear-gradient(#97b2d0 0px,#a6bfdc 14px,#bad0e9 31px,#b8d0ec 100%);border:1px solid #5b7399;border-right:2px solid #4a6590;border-bottom:1px solid #14304a;border-radius:7px 7px 3px 3px;box-sizing:border-box"></div><svg style="left:10px;top:199px;" width="17" height="17" viewBox="0 0 24 24"><rect x="5" y="1.500" width="14" height="13" fill="#fff" stroke="#666" stroke-width="1.3"/><path d="M7 5H17M7 8H17M7 11H17" stroke="#666" stroke-dasharray="2 1"/><path d="M12 15V20M1 20.500H23" stroke="#3cae78" stroke-width="1.600"/><rect x="9" y="18" width="6" height="4" fill="#777"/></svg><span class="t" style="left:31.3px;top:202px;letter-spacing:-0.157px;color:#1a1a1a;">Receive / Transmit</span><div style="left:993px;top:199px;width:32px;height:18px;border:1px solid #7f95b3;border-radius:2px;box-sizing:border-box;background:linear-gradient(#d6e2f1 0%,#c2d3e8 48%,#adc3df 52%,#bfd2e8 100%);"></div><div style="left:1004px;top:208px;width:11px;height:4px;border:1px solid #5b6b85;background:#fff;box-sizing:border-box"></div><div style="left:1027px;top:199px;width:32px;height:18px;border:1px solid #7f95b3;border-radius:2px;box-sizing:border-box;background:linear-gradient(#d6e2f1 0%,#c2d3e8 48%,#adc3df 52%,#bfd2e8 100%);"></div><div style="left:1038px;top:203px;width:10px;height:9px;border:1px solid #5b6b85;border-top-width:2px;background:#fff;box-sizing:border-box"></div><div style="left:1041px;top:207px;width:4px;height:2px;background:#5b6b85"></div><div style="left:1061px;top:199px;width:33px;height:18px;border:1px solid #7a2a20;border-radius:3px;box-sizing:border-box;background:linear-gradient(#e9a99b 0%,#d9705c 45%,#c43e26 52%,#d66a4c 100%)"></div><svg style="left:1071px;top:202px;" width="13" height="12" viewBox="0 0 13 12"><path d="M2 2L11 10M11 2L2 10" stroke="#5a1a10" stroke-width="3.4"/><path d="M2 2L11 10M11 2L2 10" stroke="#fff" stroke-width="2"/></svg><div style="left:9px;top:222px;width:1086px;height:32px;background:#bcc8db"></div><svg style="left:15px;top:226px;" width="24" height="24" viewBox="0 0 24 24"><rect x="3.5" y="6.5" width="20" height="15" fill="#fff" stroke="#444" stroke-width="1.2"/><path d="M3.5 6.5L13.5 15.5L23.5 6.5M3.5 21.5L11.1 13.25M23.5 21.5L15.9 13.25" fill="none" stroke="#444" stroke-width="1.2"/><circle cx="4.5" cy="5" r="2.300" fill="#f0b95c"/><path d="M1.0 5H8.0M4.5 1.5V8.5" stroke="#f0b95c" stroke-width="1.200" opacity=".8"/></svg><svg style="left:46px;top:226px;" width="24" height="24" viewBox="0 0 24 24"><rect x="1.5" y="3.5" width="20" height="15" fill="#c3cddc" stroke="#9ba8bb" stroke-width="1.2"/><path d="M1.5 3.5L11.5 12.5L21.5 3.5M1.5 18.5L9.1 10.25M21.5 18.5L13.9 10.25" fill="none" stroke="#9ba8bb" stroke-width="1.2"/><path d="M13 20L21 9L24 11.500L16 22.500L12 24Z" fill="#9ba8bb" stroke="#bcc8db" stroke-width=".600"/></svg><svg style="left:77px;top:226px;" width="24" height="24" viewBox="0 0 24 24"><path d="M1.500 6L5 1.500H21V13.500H5L1.500 9Z" fill="#c3cddc" stroke="#9ba8bb" stroke-width="1.600"/><path d="M8 5.500H18M8 9H18" stroke="#9ba8bb" stroke-width="1.300"/><path d="M9 22L19 10L22.500 12.500L12.500 24Z" fill="#9ba8bb" stroke="#bcc8db" stroke-width=".600"/></svg><svg style="left:108px;top:226px;" width="24" height="24" viewBox="0 0 24 24"><rect x="1" y="0" width="4.500" height="14" fill="#9ba8bb"/><rect x="8" y="0" width="4.500" height="14" fill="#9ba8bb"/><path d="M10 8L24 16L10 24Z" fill="#aab5c6"/></svg><div style="left:137px;top:226px;width:1px;height:24px;background:#8f9db4"></div><div style="left:138px;top:226px;width:1px;height:24px;background:#d5dde9"></div><span class="t" style="left:145px;top:230px;letter-spacing:-0.200px;">Filter:</span><div style="left:181px;top:226px;width:173px;height:22px;background:#fff;border:1px solid #8e9bb0;box-sizing:border-box"></div><svg style="left:186px;top:230px;" width="14" height="14" viewBox="0 0 14 14"><path d="M2 2L12 12M12 2L2 12" stroke="#a6a6a6" stroke-width="3.200"/></svg><span class="t" style="left:203.5px;top:230px;letter-spacing:-0.229px;">None</span><svg style="left:341px;top:235px;" width="7" height="4" viewBox="0 0 7 4"><path d="M0 0H7L3.5 4Z" fill="#222"/></svg><svg style="left:359px;top:226px;" width="24" height="24" viewBox="0 0 24 24"><path d="M0.500 1.500H23.500V4L14.500 13V23H9.500V13L0.500 4Z" fill="#9ba8bb"/><path d="M15.500 4.500H20.500L14.500 10.500Z" fill="#c9d2df"/><path d="M13 20L20 9L22.500 11L15.500 22L12 23Z" fill="#9ba8bb" stroke="#bcc8db" stroke-width=".600"/></svg><svg style="left:390px;top:226px;" width="24" height="24" viewBox="0 0 24 24"><path d="M0.500 1.500H23.500V4L14.500 13V23H9.500V13L0.500 4Z" fill="#6a6a6a"/><path d="M15.500 4.500H20.500L14.500 10.500Z" fill="#fff"/><path d="M14.0 19H23.0M18.5 14.5V23.5" stroke="#3cae78" stroke-width="3"/></svg><div style="left:9px;top:254px;width:1086px;height:364px;background:#fff"></div><div style="left:9px;top:275px;width:23px;height:343px;background:#fdeecb"></div><svg style="left:13px;top:257px;" width="14" height="14" viewBox="0 0 14 14"><rect x="1" y="1.500" width="11" height="4.500" fill="#fff" stroke="#111" stroke-width="1.400"/><rect x="1" y="8" width="11" height="4.500" fill="#fff" stroke="#111" stroke-width="1.400"/></svg><span class="t" style="left:-20px;top:438px;width:80px;text-align:center;font-size:18.500px;letter-spacing:0.500px;transform:rotate(-90deg);transform-origin:center;color:#222">Receive</span><span class="t" style="left:40.4px;top:258px;letter-spacing:-1.339px;">Bus</span><span class="t" style="left:73px;top:258px;letter-spacing:-0.177px;">CAN-ID (...</span><span class="t" style="left:144.1px;top:258px;letter-spacing:-1.252px;">PGN</span><span class="t" style="left:245.2px;top:258px;letter-spacing:-0.625px;">Len...</span><span class="t" style="left:285.2px;top:258px;letter-spacing:-0.083px;">Symbol</span><span class="t" style="left:433.1px;top:258px;letter-spacing:-0.749px;">Data</span><span class="t" style="left:864.4px;top:258px;letter-spacing:-0.105px;">Timing Errors</span><span class="t" style="left:948.2px;top:258px;letter-spacing:-0.214px;">Cycle T...</span><span class="t" style="left:1008.5px;top:258px;letter-spacing:0.170px;">Count</span><div style="left:66px;top:256px;width:1px;height:18px;background:#e2e2e2"></div><div style="left:137px;top:256px;width:1px;height:18px;background:#e2e2e2"></div><div style="left:238px;top:256px;width:1px;height:18px;background:#e2e2e2"></div><div style="left:278px;top:256px;width:1px;height:18px;background:#e2e2e2"></div><div style="left:426px;top:256px;width:1px;height:18px;background:#e2e2e2"></div><div style="left:857px;top:256px;width:1px;height:18px;background:#e2e2e2"></div><div style="left:941px;top:256px;width:1px;height:18px;background:#e2e2e2"></div><div style="left:1001px;top:256px;width:1px;height:18px;background:#e2e2e2"></div><svg style="left:253px;top:255px;" width="9" height="5" viewBox="0 0 9 5"><path d="M1 1L4.500 4L8 1" fill="none" stroke="#999"/></svg><div style="left:32px;top:275px;width:1046px;height:213px;background:#cce8ff"></div><span class="t" style="left:43px;top:277px;width:10px;text-align:right">1</span><span class="t" style="left:69.7px;top:277px;letter-spacing:-1.081px;">18FE6C00</span><span class="t" style="left:140px;top:277px;letter-spacing:-0.967px;">65132</span><span class="t" style="left:241px;top:277px;">8</span><span class="t" style="left:281.3px;top:277px;letter-spacing:-1.400px;">TCO1</span><span class="t" style="left:944.3px;top:277px;letter-spacing:-1.118px;">50,2</span><span class="t" style="left:1004.7px;top:277px;letter-spacing:-0.919px;">12112</span><svg style="left:432px;top:279px;" width="11" height="11" viewBox="0 0 11 11"><rect x="0.500" y="0.500" width="10" height="10" fill="#fff" stroke="#8a8a8a"/><path d="M2.5 5.500H8.500" stroke="#333"/></svg><span class="t" style="left:447px;top:277px;letter-spacing:-0.166px;">Driver1WorkingState</span><span class="t" style="left:610.4px;top:277px;letter-spacing:-0.483px;">= Rest</span><span class="t" style="left:447px;top:292px;letter-spacing:-0.166px;">Driver2WorkingState</span><span class="t" style="left:610.4px;top:292px;letter-spacing:-0.483px;">= Rest</span><span class="t" style="left:447px;top:307px;letter-spacing:0.082px;">VehicleMotion</span><span class="t" style="left:610.4px;top:307px;letter-spacing:0.044px;">= Vehicle motion not detected</span><span class="t" style="left:447px;top:322px;letter-spacing:-0.303px;">Driver1TimeRelatedStates</span><span class="t" style="left:610.4px;top:322px;letter-spacing:0.110px;">= Normal/No limits reached</span><span class="t" style="left:447px;top:337px;letter-spacing:-0.374px;">DriverCard_Driver1</span><span class="t" style="left:610.4px;top:337px;letter-spacing:-0.075px;">= Driver card not present</span><span class="t" style="left:447px;top:352px;letter-spacing:-0.326px;">VehicleOverspeed</span><span class="t" style="left:610.4px;top:352px;letter-spacing:-0.150px;">= No overspeed</span><span class="t" style="left:447px;top:367px;letter-spacing:-0.303px;">Driver2TimeRelatedStates</span><span class="t" style="left:610.4px;top:367px;letter-spacing:0.110px;">= Normal/No limits reached</span><span class="t" style="left:447px;top:382px;letter-spacing:-0.344px;">DriverCard_Driver2</span><span class="t" style="left:610.4px;top:382px;letter-spacing:-0.075px;">= Driver card not present</span><span class="t" style="left:447px;top:397px;letter-spacing:-0.370px;">SystemEvent</span><span class="t" style="left:610.4px;top:397px;letter-spacing:0.043px;">= No tachograph event</span><span class="t" style="left:447px;top:412px;letter-spacing:0.217px;">HandlingInformation</span><span class="t" style="left:610.4px;top:412px;letter-spacing:0.205px;">= No handling information</span><span class="t" style="left:447px;top:427px;letter-spacing:-0.055px;">TachographPerformance</span><span class="t" style="left:610.4px;top:427px;letter-spacing:0.078px;">= Normal performance</span><span class="t" style="left:447px;top:442px;letter-spacing:0.078px;">DirectionIndicator</span><span class="t" style="left:610.4px;top:442px;letter-spacing:-0.156px;">= Forward</span><span class="t" style="left:447px;top:457px;letter-spacing:-0.102px;">TachographOutputShaftSpeed</span><span class="t" style="left:610.4px;top:457px;letter-spacing:-0.116px;">= 0,0 rpm</span><span class="t" style="left:447px;top:472px;letter-spacing:-0.229px;">TachographVehicleSpeed</span><span class="t" style="left:610.4px;top:472px;letter-spacing:0.006px;">= 58,4 km/h</span><span class="t" style="left:43px;top:490px;width:10px;text-align:right">1</span><span class="t" style="left:69.7px;top:490px;letter-spacing:-1.315px;">18FEE900</span><span class="t" style="left:140px;top:490px;letter-spacing:-0.967px;">65257</span><span class="t" style="left:241px;top:490px;">8</span><span class="t" style="left:281.3px;top:490px;letter-spacing:-1.400px;">LFC</span><span class="t" style="left:944.3px;top:490px;letter-spacing:-0.707px;">999,9</span><span class="t" style="left:1004.7px;top:490px;letter-spacing:-1.400px;">605</span><svg style="left:432px;top:491px;" width="11" height="11" viewBox="0 0 11 11"><rect x="0.500" y="0.500" width="10" height="10" fill="#fff" stroke="#8a8a8a"/><path d="M2.5 5.500H8.500" stroke="#333"/><path d="M5.500 2.500V8.500" stroke="#333"/></svg><span class="t" style="left:43px;top:508px;width:10px;text-align:right">1</span><span class="t" style="left:69.7px;top:508px;letter-spacing:-1.315px;">18FEE500</span><span class="t" style="left:140px;top:508px;letter-spacing:-0.967px;">65253</span><span class="t" style="left:241px;top:508px;">8</span><span class="t" style="left:281.3px;top:508px;letter-spacing:-1.209px;">HOURS</span><span class="t" style="left:944.3px;top:508px;letter-spacing:-0.707px;">999,9</span><span class="t" style="left:1004.7px;top:508px;letter-spacing:-1.400px;">605</span><svg style="left:432px;top:509px;" width="11" height="11" viewBox="0 0 11 11"><rect x="0.500" y="0.500" width="10" height="10" fill="#fff" stroke="#8a8a8a"/><path d="M2.5 5.500H8.500" stroke="#333"/><path d="M5.500 2.500V8.500" stroke="#333"/></svg><span class="t" style="left:43px;top:526px;width:10px;text-align:right">1</span><span class="t" style="left:69.7px;top:526px;letter-spacing:-1.152px;">18FEC100</span><span class="t" style="left:140px;top:526px;letter-spacing:-0.967px;">65217</span><span class="t" style="left:241px;top:526px;">8</span><span class="t" style="left:281.3px;top:526px;letter-spacing:-1.101px;">VDHR</span><span class="t" style="left:944.3px;top:526px;letter-spacing:-0.707px;">999,9</span><span class="t" style="left:1004.7px;top:526px;letter-spacing:-1.400px;">605</span><svg style="left:432px;top:527px;" width="11" height="11" viewBox="0 0 11 11"><rect x="0.500" y="0.500" width="10" height="10" fill="#fff" stroke="#8a8a8a"/><path d="M2.5 5.500H8.500" stroke="#333"/></svg><span class="t" style="left:447px;top:526px;letter-spacing:-0.180px;">TotalVehicleDistance</span><span class="t" style="left:558.8px;top:526px;letter-spacing:-0.382px;">= 875 m</span><span class="t" style="left:447px;top:541px;letter-spacing:-0.264px;">TripDistance</span><span class="t" style="left:558.8px;top:541px;letter-spacing:-0.187px;">= 0 m</span><span class="t" style="left:43px;top:559px;width:10px;text-align:right">1</span><span class="t" style="left:69.7px;top:559px;letter-spacing:-0.963px;">18F00300</span><span class="t" style="left:140px;top:559px;letter-spacing:-0.967px;">61443</span><span class="t" style="left:241px;top:559px;">8</span><span class="t" style="left:281.3px;top:559px;letter-spacing:-1.400px;">EEC2</span><span class="t" style="left:944.3px;top:559px;letter-spacing:-1.118px;">50,2</span><span class="t" style="left:1004.7px;top:559px;letter-spacing:-0.921px;">12111</span><svg style="left:432px;top:560px;" width="11" height="11" viewBox="0 0 11 11"><rect x="0.500" y="0.500" width="10" height="10" fill="#fff" stroke="#8a8a8a"/><path d="M2.5 5.500H8.500" stroke="#333"/></svg><span class="t" style="left:447px;top:559px;letter-spacing:-0.150px;">AcceleratorPedal1LowIdleSwitch</span><span class="t" style="left:648.8px;top:559px;letter-spacing:-0.055px;">= Accelerator pedal 1 not in low idle c...</span><span class="t" style="left:447px;top:574px;letter-spacing:-0.089px;">AcceleratorPedalKickdownSwitch</span><span class="t" style="left:648.8px;top:574px;letter-spacing:-0.178px;">= Kickdown passive</span><span class="t" style="left:447px;top:589px;letter-spacing:-0.292px;">RoadSpeedLimitStatus</span><span class="t" style="left:648.8px;top:589px;letter-spacing:0.035px;">= Active</span><span class="t" style="left:447px;top:604px;letter-spacing:-0.150px;">AcceleratorPedal2LowIdleSwitch</span><span class="t" style="left:648.8px;top:604px;letter-spacing:-0.055px;">= Accelerator pedal 2 not in low idle c...</span><div style="left:32px;top:505px;width:1046px;height:1px;background:#adadad"></div><div style="left:32px;top:523px;width:1046px;height:1px;background:#adadad"></div><div style="left:32px;top:556px;width:1046px;height:1px;background:#adadad"></div><div style="left:66px;top:275px;width:1px;height:213px;background:#b6c8da"></div><div style="left:66px;top:488px;width:1px;height:130px;background:#b9b9b9"></div><div style="left:137px;top:275px;width:1px;height:213px;background:#b6c8da"></div><div style="left:137px;top:488px;width:1px;height:130px;background:#b9b9b9"></div><div style="left:238px;top:275px;width:1px;height:213px;background:#b6c8da"></div><div style="left:238px;top:488px;width:1px;height:130px;background:#b9b9b9"></div><div style="left:278px;top:275px;width:1px;height:213px;background:#b6c8da"></div><div style="left:278px;top:488px;width:1px;height:130px;background:#b9b9b9"></div><div style="left:426px;top:275px;width:1px;height:213px;background:#b6c8da"></div><div style="left:426px;top:488px;width:1px;height:130px;background:#b9b9b9"></div><div style="left:857px;top:275px;width:1px;height:213px;background:#b6c8da"></div><div style="left:857px;top:488px;width:1px;height:130px;background:#b9b9b9"></div><div style="left:941px;top:275px;width:1px;height:213px;background:#b6c8da"></div><div style="left:941px;top:488px;width:1px;height:130px;background:#b9b9b9"></div><div style="left:1001px;top:275px;width:1px;height:213px;background:#b6c8da"></div><div style="left:1001px;top:488px;width:1px;height:130px;background:#b9b9b9"></div><div style="left:1078px;top:275px;width:17px;height:343px;background:#f0f0f0"></div><svg style="left:1082px;top:281px;" width="9" height="6" viewBox="0 0 9 6"><path d="M1 5L4.500 1.500L8 5" fill="none" stroke="#555" stroke-width="1.500"/></svg><svg style="left:1082px;top:608px;" width="9" height="6" viewBox="0 0 9 6"><path d="M1 1L4.500 4.500L8 1" fill="none" stroke="#555" stroke-width="1.500"/></svg><div style="left:1079px;top:553px;width:15px;height:17px;background:#cdcdcd"></div>
<div style="left:2px;top:626px;width:424px;height:211px;background:linear-gradient(#bccadb 0px,#c6d3e3 10px,#d5e1ef 29px,#d2dfee 100%);border:1px solid #9fb0c8;border-right:1px solid #24384e;border-radius:4px 4px 2px 2px;box-sizing:border-box"></div><svg style="left:11px;top:637px;" width="16" height="16" viewBox="0 0 24 24"><circle cx="6.500" cy="15" r="4.500" fill="none" stroke="#444" stroke-width="2"/><circle cx="17.500" cy="15" r="4.500" fill="none" stroke="#444" stroke-width="2"/><path d="M2 13L6 5M22 13L18 5M11 14H13" stroke="#444" stroke-width="2" fill="none"/></svg><span class="t" style="left:30.7px;top:638px;letter-spacing:-0.016px;color:#9a9a9a;">Watch</span><div style="left:316px;top:635px;width:32px;height:18px;border:1px solid #7f95b3;border-radius:2px;box-sizing:border-box;background:linear-gradient(#d6e2f1 0%,#c2d3e8 48%,#adc3df 52%,#bfd2e8 100%);"></div><div style="left:327px;top:644px;width:11px;height:4px;border:1px solid #5b6b85;background:#fff;box-sizing:border-box"></div><div style="left:350px;top:635px;width:32px;height:18px;border:1px solid #7f95b3;border-radius:2px;box-sizing:border-box;background:linear-gradient(#d6e2f1 0%,#c2d3e8 48%,#adc3df 52%,#bfd2e8 100%);"></div><div style="left:361px;top:639px;width:10px;height:9px;border:1px solid #5b6b85;border-top-width:2px;background:#fff;box-sizing:border-box"></div><div style="left:364px;top:643px;width:4px;height:2px;background:#5b6b85"></div><div style="left:384px;top:635px;width:33px;height:18px;border:1px solid #7f95b3;border-radius:2px;box-sizing:border-box;background:linear-gradient(#d6e2f1 0%,#c2d3e8 48%,#adc3df 52%,#bfd2e8 100%);"></div><svg style="left:394px;top:638px;" width="13" height="12" viewBox="0 0 13 12"><path d="M2 2L11 10M11 2L2 10" stroke="#5b6b85" stroke-width="4"/><path d="M2 2L11 10M11 2L2 10" stroke="#fff" stroke-width="2.2"/></svg><div style="left:9px;top:656px;width:409px;height:174px;background:#fff"></div><span class="t" style="left:15.4px;top:660px;letter-spacing:-0.436px;">Name</span><span class="t" style="left:195px;top:660px;letter-spacing:-0.650px;">Value</span><span class="t" style="left:289.4px;top:660px;letter-spacing:-0.069px;">Meter</span><div style="left:188px;top:658px;width:1px;height:18px;background:#ececec"></div><div style="left:282px;top:658px;width:1px;height:18px;background:#ececec"></div><span class="t" style="left:10.4px;top:679px;letter-spacing:-0.416px;font-size:11px;">EngineSpeed</span><span class="t" style="left:190.2px;top:679px;letter-spacing:-0.040px;font-size:11px;">637,6 rpm</span><div style="left:293px;top:680px;width:9px;height:10px;background:#4848e8"></div><div style="left:293px;top:685px;width:116px;height:1px;background:#111"></div><div style="left:293px;top:679px;width:1px;height:12px;background:#111"></div><span class="t" style="left:10.4px;top:696px;letter-spacing:-0.354px;font-size:11px;">WheelBasedVehicleSpeed</span><span class="t" style="left:190.2px;top:696px;letter-spacing:-0.025px;font-size:11px;">58,4 km/h</span><div style="left:293px;top:697px;width:27px;height:10px;background:#4848e8"></div><div style="left:293px;top:702px;width:116px;height:1px;background:#111"></div><div style="left:293px;top:696px;width:1px;height:12px;background:#111"></div><span class="t" style="left:10.4px;top:713px;letter-spacing:-0.212px;font-size:11px;">TachographVehicleSpeed</span><span class="t" style="left:190.2px;top:713px;letter-spacing:-0.025px;font-size:11px;">58,4 km/h</span><div style="left:293px;top:714px;width:27px;height:10px;background:#4848e8"></div><div style="left:293px;top:719px;width:116px;height:1px;background:#111"></div><div style="left:293px;top:713px;width:1px;height:12px;background:#111"></div><div style="left:13px;top:730px;width:174px;height:13px;border:1px dotted #333;box-sizing:border-box"></div><div style="left:9px;top:804px;width:409px;height:26px;background:#2a3a5b"></div><div style="left:9px;top:804px;width:72px;height:22px;background:#fff"></div><svg style="left:12px;top:807px;" width="16" height="16" viewBox="0 0 24 24"><circle cx="6.500" cy="15" r="4.500" fill="none" stroke="#444" stroke-width="2"/><circle cx="17.500" cy="15" r="4.500" fill="none" stroke="#444" stroke-width="2"/><path d="M2 13L6 5M22 13L18 5M11 14H13" stroke="#444" stroke-width="2" fill="none"/></svg><span class="t" style="left:33.8px;top:808px;letter-spacing:-0.240px;font-size:11px;">Watch 1</span><span class="t" style="left:87.6px;top:808px;letter-spacing:-0.057px;color:#e8ecf4;font-size:11px;">Watch 2</span><span class="t" style="left:141.4px;top:808px;letter-spacing:0.010px;color:#e8ecf4;font-size:11px;">Watch 3</span><span class="t" style="left:195.2px;top:808px;letter-spacing:0.010px;color:#e8ecf4;font-size:11px;">Watch 4</span><div style="left:134px;top:807px;width:1px;height:16px;background:#4a5a7c"></div><div style="left:188px;top:807px;width:1px;height:16px;background:#4a5a7c"></div><div style="left:242px;top:807px;width:1px;height:16px;background:#4a5a7c"></div>
<div style="left:426px;top:626px;width:677px;height:211px;background:linear-gradient(#bccadb 0px,#c6d3e3 10px,#d5e1ef 29px,#d2dfee 100%);border:1px solid #9fb0c8;border-right:2px solid #5f7899;border-radius:4px 4px 2px 2px;box-sizing:border-box"></div><svg style="left:434px;top:635px;" width="17" height="17" viewBox="0 0 24 24"><path d="M4.500 1.500H14L19.500 7V22.500H4.500Z" fill="#fff" stroke="#555" stroke-width="1.300"/><path d="M14 1.500V7H19.500" fill="none" stroke="#555" stroke-width="1.300"/><rect x="1" y="11" width="20" height="9" fill="#2f6cb3"/><path d="M4 13V18M7 13V18M11 13V18M15 13V18M18 13V18" stroke="#cfe0f5" stroke-width="1.300"/></svg><span class="t" style="left:455.3px;top:638px;letter-spacing:-0.228px;color:#9a9a9a;">C:\...\_temp\2016-06-01_08-06-05_278.trc</span><div style="left:993px;top:635px;width:32px;height:18px;border:1px solid #7f95b3;border-radius:2px;box-sizing:border-box;background:linear-gradient(#d6e2f1 0%,#c2d3e8 48%,#adc3df 52%,#bfd2e8 100%);"></div><div style="left:1004px;top:644px;width:11px;height:4px;border:1px solid #5b6b85;background:#fff;box-sizing:border-box"></div><div style="left:1027px;top:635px;width:32px;height:18px;border:1px solid #7f95b3;border-radius:2px;box-sizing:border-box;background:linear-gradient(#d6e2f1 0%,#c2d3e8 48%,#adc3df 52%,#bfd2e8 100%);"></div><div style="left:1038px;top:639px;width:10px;height:9px;border:1px solid #5b6b85;border-top-width:2px;background:#fff;box-sizing:border-box"></div><div style="left:1041px;top:643px;width:4px;height:2px;background:#5b6b85"></div><div style="left:1061px;top:635px;width:33px;height:18px;border:1px solid #7f95b3;border-radius:2px;box-sizing:border-box;background:linear-gradient(#d6e2f1 0%,#c2d3e8 48%,#adc3df 52%,#bfd2e8 100%);"></div><svg style="left:1071px;top:638px;" width="13" height="12" viewBox="0 0 13 12"><path d="M2 2L11 10M11 2L2 10" stroke="#5b6b85" stroke-width="4"/><path d="M2 2L11 10M11 2L2 10" stroke="#fff" stroke-width="2.2"/></svg><div style="left:433px;top:656px;width:661px;height:34px;background:#bcc8db"></div><svg style="left:439px;top:661px;" width="24" height="24" viewBox="0 0 24 24"><circle cx="12" cy="12" r="10" fill="#929eb2"/></svg><svg style="left:470px;top:661px;" width="24" height="24" viewBox="0 0 24 24"><rect x="4" y="2" width="6" height="20" rx="1" fill="#f0b95c"/><rect x="14" y="2" width="6" height="20" rx="1" fill="#f0b95c"/></svg><svg style="left:501px;top:661px;" width="24" height="24" viewBox="0 0 24 24"><rect x="3" y="3" width="18" height="18" fill="#2f6cb3"/></svg><svg style="left:532px;top:661px;" width="24" height="24" viewBox="0 0 24 24"><path d="M2 1L23 12L2 23Z" fill="#929eb2"/></svg><svg style="left:563px;top:661px;" width="24" height="24" viewBox="0 0 24 24"><path d="M20 9.500A8.300 8.300 0 1 1 11.500 4.800" fill="none" stroke="#2f6cb3" stroke-width="3.800"/><path d="M10.500 -1L18 5L10.500 11Z" fill="#2f6cb3"/></svg><div style="left:592px;top:661px;width:1px;height:24px;background:#8f9db4"></div><div style="left:593px;top:661px;width:1px;height:24px;background:#d5dde9"></div><span class="t" style="left:600.5px;top:666px;letter-spacing:-0.333px;">Filter:</span><div style="left:636px;top:662px;width:173px;height:22px;background:#fff;border:1px solid #8e9bb0;box-sizing:border-box"></div><svg style="left:639px;top:664px;" width="17" height="17" viewBox="0 0 24 24"><g transform="translate(1,1) scale(.92)"><path d="M0.500 1.500H23.500V4L14.500 13V23H9.500V13L0.500 4Z" fill="#777"/><path d="M15.500 4.500H20.500L14.500 10.500Z" fill="#fff"/></g></svg><span class="t" style="left:658.4px;top:666px;letter-spacing:-0.772px;">FMS Stack</span><svg style="left:796px;top:671px;" width="7" height="4" viewBox="0 0 7 4"><path d="M0 0H7L3.5 4Z" fill="#222"/></svg><svg style="left:815px;top:661px;" width="24" height="24" viewBox="0 0 24 24"><path d="M0.500 1.500H23.500V4L14.500 13V23H9.500V13L0.500 4Z" fill="#6a6a6a"/><path d="M15.500 4.500H20.500L14.500 10.500Z" fill="#fff"/><path d="M13 20L20 9L23 11L16 22L12 23.500Z" fill="#2f6cb3" stroke="#bcc8db" stroke-width=".600"/></svg><svg style="left:846px;top:661px;" width="24" height="24" viewBox="0 0 24 24"><path d="M0.500 1.500H23.500V4L14.500 13V23H9.500V13L0.500 4Z" fill="#6a6a6a"/><path d="M15.500 4.500H20.500L14.500 10.500Z" fill="#fff"/><path d="M14.0 19H23.0M18.5 14.5V23.5" stroke="#3cae78" stroke-width="3"/></svg><svg style="left:876px;top:661px;" width="24" height="24" viewBox="0 0 24 24"><path d="M0.500 1.500H23.500V4L14.500 13V23H9.500V13L0.500 4Z" fill="#9ba8bb"/><path d="M15.500 4.500H20.500L14.500 10.500Z" fill="#c9d2df"/><path d="M17 11H22L19 15H22L15 23L17 17H14Z" fill="#9ba8bb" stroke="#bcc8db" stroke-width=".600"/></svg><div style="left:1062px;top:658px;width:32px;height:30px;background:#fdf0c8;border:1px solid #ecd08a;box-sizing:border-box"></div><svg style="left:1066px;top:661px;" width="24" height="24" viewBox="0 0 24 24"><rect x="3.500" y="0.500" width="17" height="23" fill="#e8e8e8" stroke="#888"/><rect x="5" y="2" width="14" height="9" fill="#aaa"/><path d="M8 9L12 5L16 9Z" fill="#fff"/><rect x="5" y="13" width="14" height="9" fill="#2f6cb3"/><path d="M8 15L12 19L16 15Z" fill="#fff"/></svg><div style="left:433px;top:690px;width:661px;height:114px;background:#fff"></div><div style="left:433px;top:711px;width:26px;height:89px;background:#f0f0f0"></div><span class="t" style="left:463.5px;top:694px;letter-spacing:-0.172px;">Time (rel.)</span><span class="t" style="left:546.4px;top:694px;letter-spacing:-1.389px;">Bus</span><span class="t" style="left:581.4px;top:694px;letter-spacing:-0.160px;">ID (hex.) / Symbol</span><span class="t" style="left:707.4px;top:694px;letter-spacing:-1.007px;">Rx/Tx</span><span class="t" style="left:749px;top:694px;letter-spacing:-0.505px;">Type</span><span class="t" style="left:826.1px;top:694px;letter-spacing:-0.414px;">Prio</span><span class="t" style="left:861.1px;top:694px;letter-spacing:-1.302px;">PGN</span><span class="t" style="left:910.2px;top:694px;letter-spacing:-1.400px;">SA</span><span class="t" style="left:944.7px;top:694px;letter-spacing:-0.770px;">DA</span><span class="t" style="left:980.2px;top:694px;letter-spacing:-0.200px;">Length</span><span class="t" style="left:1029.2px;top:694px;letter-spacing:-0.426px;">Data (hex.)</span><div style="left:539px;top:692px;width:1px;height:18px;background:#ebebeb"></div><div style="left:576px;top:692px;width:1px;height:18px;background:#ebebeb"></div><div style="left:700px;top:692px;width:1px;height:18px;background:#ebebeb"></div><div style="left:742px;top:692px;width:1px;height:18px;background:#ebebeb"></div><div style="left:819px;top:692px;width:1px;height:18px;background:#ebebeb"></div><div style="left:854px;top:692px;width:1px;height:18px;background:#ebebeb"></div><div style="left:903px;top:692px;width:1px;height:18px;background:#ebebeb"></div><div style="left:938px;top:692px;width:1px;height:18px;background:#ebebeb"></div><div style="left:973px;top:692px;width:1px;height:18px;background:#ebebeb"></div><div style="left:1022px;top:692px;width:1px;height:18px;background:#ebebeb"></div><span class="m" style="left:475.5px;top:712px;">254,3776</span><span class="m" style="left:546.5px;top:712px;">1</span><span class="m" style="left:580.7px;top:712px;">TCO1</span><span class="m" style="left:707px;top:712px;">Rx</span><span class="m" style="left:749px;top:712px;">Data</span><span class="m" style="left:826px;top:712px;">6</span><span class="m" style="left:860.5px;top:712px;">65132</span><span class="m" style="left:910px;top:712px;">0</span><span class="m" style="left:944.5px;top:712px;">255</span><span class="m" style="left:980px;top:712px;">8</span><span class="m" style="left:1028.5px;top:712px;">00 ...</span><span class="m" style="left:475.5px;top:727px;">254,3856</span><span class="m" style="left:546.5px;top:727px;">1</span><span class="m" style="left:580.7px;top:727px;">EEC1</span><span class="m" style="left:707px;top:727px;">Rx</span><span class="m" style="left:749px;top:727px;">Data</span><span class="m" style="left:826px;top:727px;">6</span><span class="m" style="left:860.5px;top:727px;">61444</span><span class="m" style="left:910px;top:727px;">0</span><span class="m" style="left:944.5px;top:727px;">255</span><span class="m" style="left:980px;top:727px;">8</span><span class="m" style="left:1028.5px;top:727px;">00 ...</span><span class="m" style="left:475.5px;top:742px;">254,4066</span><span class="m" style="left:546.5px;top:742px;">1</span><span class="m" style="left:580.7px;top:742px;">EEC1</span><span class="m" style="left:707px;top:742px;">Rx</span><span class="m" style="left:749px;top:742px;">Data</span><span class="m" style="left:826px;top:742px;">6</span><span class="m" style="left:860.5px;top:742px;">61444</span><span class="m" style="left:910px;top:742px;">0</span><span class="m" style="left:944.5px;top:742px;">255</span><span class="m" style="left:980px;top:742px;">8</span><span class="m" style="left:1028.5px;top:742px;">00 ...</span><span class="m" style="left:475.5px;top:757px;">254,4256</span><span class="m" style="left:546.5px;top:757px;">1</span><span class="m" style="left:580.7px;top:757px;">EEC1</span><span class="m" style="left:707px;top:757px;">Rx</span><span class="m" style="left:749px;top:757px;">Data</span><span class="m" style="left:826px;top:757px;">6</span><span class="m" style="left:860.5px;top:757px;">61444</span><span class="m" style="left:910px;top:757px;">0</span><span class="m" style="left:944.5px;top:757px;">255</span><span class="m" style="left:980px;top:757px;">8</span><span class="m" style="left:1028.5px;top:757px;">00 ...</span><span class="m" style="left:475.5px;top:772px;">254,4276</span><span class="m" style="left:546.5px;top:772px;">1</span><span class="m" style="left:580.7px;top:772px;">EEC2</span><span class="m" style="left:707px;top:772px;">Rx</span><span class="m" style="left:749px;top:772px;">Data</span><span class="m" style="left:826px;top:772px;">6</span><span class="m" style="left:860.5px;top:772px;">61443</span><span class="m" style="left:910px;top:772px;">0</span><span class="m" style="left:944.5px;top:772px;">255</span><span class="m" style="left:980px;top:772px;">8</span><span class="m" style="left:1028.5px;top:772px;">00 ...</span><div style="left:1078px;top:711px;width:16px;height:92px;background:#f0f0f0"></div><svg style="left:1082px;top:717px;" width="9" height="6" viewBox="0 0 9 6"><path d="M1 5L4.500 1.500L8 5" fill="none" stroke="#555" stroke-width="1.500"/></svg><svg style="left:1082px;top:793px;" width="9" height="6" viewBox="0 0 9 6"><path d="M1 1L4.500 4.500L8 1" fill="none" stroke="#555" stroke-width="1.500"/></svg><div style="left:1079px;top:769px;width:14px;height:17px;background:#cdcdcd"></div><div style="left:433px;top:803px;width:661px;height:26px;background:#2a3a5b"></div><div style="left:440px;top:809px;width:15px;height:15px;background:#d8482e;border-radius:8px"></div><span class="t" style="left:458.8px;top:810px;letter-spacing:-0.282px;color:#e8ecf4;">Started</span><span class="t" style="left:558.8px;top:810px;letter-spacing:-0.611px;color:#e8ecf4;">File</span><span class="t" style="left:622.2px;top:810px;letter-spacing:-0.809px;color:#e8ecf4;">254,4205 s</span><span class="t" style="left:708px;top:810px;letter-spacing:-0.262px;color:#e8ecf4;">Total: 27500</span><span class="t" style="left:807px;top:810px;letter-spacing:-0.863px;color:#e8ecf4;">Rx: 27500</span><span class="t" style="left:897.4px;top:810px;letter-spacing:-0.768px;color:#e8ecf4;">Tx: 0</span><span class="t" style="left:989.3px;top:810px;letter-spacing:-0.420px;color:#e8ecf4;">Status: 0</span><span class="t" style="left:1075px;top:810px;letter-spacing:-0.557px;color:#e8ecf4;">Erro</span><div style="left:1086px;top:818px;width:8px;height:12px;background:#2a3a5b"></div><div style="left:1094px;top:804px;width:9px;height:26px;background:#d0deef"></div><svg style="left:1084px;top:820px;" width="10" height="10" viewBox="0 0 10 10"><path d="M8 2V3M8 5V6M8 8V9M5 5V6M5 8V9M2 8V9" stroke="#ccd" stroke-width="1.500"/></svg>
<div style="left:1108px;top:158px;width:349px;height:20px;background:linear-gradient(#44577f,#3a4c73)"></div><span class="t" style="left:1112px;top:161px;letter-spacing:-0.060px;color:#fff;">Project Manager</span><svg style="left:1441px;top:162px;" width="12" height="12" viewBox="0 0 12 12"><path d="M2 2L10 10M10 2L2 10" stroke="#fff" stroke-width="1.600"/></svg><div style="left:1108px;top:178px;width:349px;height:33px;background:#bcc8db"></div><svg style="left:1115px;top:184px;" width="24" height="24" viewBox="0 0 24 24"><rect x="4" y="5" width="17" height="17" fill="#fff" stroke="#2f6cb3" stroke-width="3.400"/><circle cx="2.5" cy="4" r="2.300" fill="#f0b95c"/><path d="M-1.0 4H6.0M2.5 0.5V7.5" stroke="#f0b95c" stroke-width="1.200" opacity=".8"/></svg><span class="t" style="left:1141.2px;top:188px;letter-spacing:-0.102px;">New</span><svg style="left:1173px;top:183px;" width="24" height="24" viewBox="0 0 24 24"><rect x="2.700" y="2.700" width="17" height="17" fill="#fff" stroke="#2f6cb3" stroke-width="3.400"/><path d="M14 19H24M19 14V24" stroke="#3cae78" stroke-width="3.2"/></svg><span class="t" style="left:1200px;top:188px;letter-spacing:-0.026px;">Add</span><svg style="left:1230px;top:183px;" width="24" height="24" viewBox="0 0 24 24"><path d="M3.500 3.500L20.500 20.500M20.500 3.500L3.500 20.500" stroke="#d8482e" stroke-width="4.800"/></svg><span class="t" style="left:1257.3px;top:188px;letter-spacing:-0.1px">Re<u>m</u>ove</span><div style="left:1108px;top:211px;width:349px;height:321px;background:#fff"></div><div style="left:1166px;top:249px;width:116px;height:18px;background:#d9d9d9"></div><div style="left:1138px;top:232px;width:1px;height:190px;background-image:linear-gradient(#999 50%,transparent 50%);background-size:1px 2px"></div><div style="left:1157px;top:250px;width:1px;height:45px;background-image:linear-gradient(#999 50%,transparent 50%);background-size:1px 2px"></div><div style="left:1157px;top:322px;width:1px;height:27px;background-image:linear-gradient(#999 50%,transparent 50%);background-size:1px 2px"></div><div style="left:1157px;top:394px;width:1px;height:9px;background-image:linear-gradient(#999 50%,transparent 50%);background-size:1px 2px"></div><div style="left:1157px;top:430px;width:1px;height:100px;background-image:linear-gradient(#999 50%,transparent 50%);background-size:1px 2px"></div><svg style="left:1113px;top:219px;" width="10" height="7" viewBox="0 0 10 7"><path d="M1 1L5 5L9 1" fill="none" stroke="#333" stroke-width="1.500"/></svg><div style="left:1124px;top:222px;width:5px;height:1px;background-image:linear-gradient(90deg,#999 50%,transparent 50%);background-size:2px 1px"></div><svg style="left:1129px;top:213px;" width="18" height="18" viewBox="0 0 24 24"><rect x="1.500" y="2.500" width="19" height="17" fill="#fff" stroke="#666" stroke-width="1.300"/><rect x="1" y="2" width="20" height="3.500" fill="#1d4f91"/><path d="M4 9H12M4 12H12M4 15H9" stroke="#555" stroke-width="1.300"/><path d="M10 11H15L19 19H23V22H17L13 14H10Z" fill="#1d4f91"/><rect x="18" y="10" width="5" height="5" fill="#9db5d8"/></svg><span class="t" style="left:1151px;top:215px;letter-spacing:-0.007px;">Project 'Truck Diagnostic'</span><svg style="left:1132px;top:237px;" width="10" height="7" viewBox="0 0 10 7"><path d="M1 1L5 5L9 1" fill="none" stroke="#333" stroke-width="1.500"/></svg><div style="left:1143px;top:240px;width:5px;height:1px;background-image:linear-gradient(90deg,#999 50%,transparent 50%);background-size:2px 1px"></div><svg style="left:1148px;top:231px;" width="18" height="18" viewBox="0 0 24 24"><path d="M2 4H10L12 7H22V20H2Z" fill="#8a8a8a"/><path d="M2 8H22V21H2Z" fill="#f0b95c"/><g transform="translate(5,7) scale(.600)"><g transform="rotate(-45 12 12)" fill="none" stroke="#6b5a2a" stroke-width="3.6"><rect x="0.500" y="7.500" width="13" height="9" rx="4.500"/><rect x="10.500" y="7.500" width="13" height="9" rx="4.500"/></g></g></svg><span class="t" style="left:1170px;top:233px;letter-spacing:-0.021px;">Connections</span><div style="left:1158px;top:258px;width:9px;height:1px;background-image:linear-gradient(90deg,#999 50%,transparent 50%);background-size:2px 1px"></div><svg style="left:1167px;top:249px;" width="18" height="18" viewBox="0 0 24 24"><g transform="rotate(-45 12 12)" fill="none" stroke="#2f6cb3" stroke-width="2.7"><rect x="0.500" y="7.500" width="13" height="9" rx="4.500"/><rect x="10.500" y="7.500" width="13" height="9" rx="4.500"/></g></svg><span class="t" style="left:1189px;top:251px;letter-spacing:-0.152px;">FMS Connection</span><div style="left:1158px;top:276px;width:9px;height:1px;background-image:linear-gradient(90deg,#999 50%,transparent 50%);background-size:2px 1px"></div><svg style="left:1167px;top:267px;" width="18" height="18" viewBox="0 0 24 24"><g transform="translate(-1,-1)"><g transform="rotate(-45 12 12)" fill="none" stroke="#2f6cb3" stroke-width="3.0"><rect x="0.500" y="7.500" width="13" height="9" rx="4.500"/><rect x="10.500" y="7.500" width="13" height="9" rx="4.500"/></g></g><circle cx="17.500" cy="17.500" r="5" fill="#fff" stroke="#d8482e" stroke-width="2.200"/><path d="M14 21L21 14" stroke="#d8482e" stroke-width="2.200"/></svg><span class="t" style="left:1189px;top:269px;letter-spacing:-0.150px;">CAN FD Connection</span><div style="left:1158px;top:294px;width:9px;height:1px;background-image:linear-gradient(90deg,#999 50%,transparent 50%);background-size:2px 1px"></div><svg style="left:1167px;top:285px;" width="18" height="18" viewBox="0 0 24 24"><g transform="rotate(-45 12 12)" fill="none" stroke="#2f6cb3" stroke-width="2.7"><rect x="0.500" y="7.500" width="13" height="9" rx="4.500"/><rect x="10.500" y="7.500" width="13" height="9" rx="4.500"/></g></svg><span class="t" style="left:1189px;top:287px;letter-spacing:-0.101px;">PCAN-Gateway Connection</span><svg style="left:1132px;top:309px;" width="10" height="7" viewBox="0 0 10 7"><path d="M1 1L5 5L9 1" fill="none" stroke="#333" stroke-width="1.500"/></svg><div style="left:1143px;top:312px;width:5px;height:1px;background-image:linear-gradient(90deg,#999 50%,transparent 50%);background-size:2px 1px"></div><svg style="left:1148px;top:303px;" width="18" height="18" viewBox="0 0 24 24"><path d="M2 4H10L12 7H22V20H2Z" fill="#8a8a8a"/><path d="M2 8H22V21H2Z" fill="#f0b95c"/><path d="M7 11H17L13.500 15V20H10.500V15Z" fill="#777"/></svg><span class="t" style="left:1170px;top:305px;letter-spacing:-0.371px;">Message Filters</span><div style="left:1158px;top:330px;width:9px;height:1px;background-image:linear-gradient(90deg,#999 50%,transparent 50%);background-size:2px 1px"></div><svg style="left:1167px;top:321px;" width="18" height="18" viewBox="0 0 24 24"><g transform="translate(1,1) scale(.92)"><path d="M0.500 1.500H23.500V4L14.500 13V23H9.500V13L0.500 4Z" fill="#777"/><path d="M15.500 4.500H20.500L14.500 10.500Z" fill="#fff"/></g></svg><span class="t" style="left:1189px;top:323px;letter-spacing:-0.710px;">FMS Stack</span><div style="left:1158px;top:348px;width:9px;height:1px;background-image:linear-gradient(90deg,#999 50%,transparent 50%);background-size:2px 1px"></div><svg style="left:1167px;top:339px;" width="18" height="18" viewBox="0 0 24 24"><g transform="translate(1,1) scale(.92)"><path d="M0.500 1.500H23.500V4L14.500 13V23H9.500V13L0.500 4Z" fill="#777"/><path d="M15.500 4.500H20.500L14.500 10.500Z" fill="#fff"/></g></svg><span class="t" style="left:1189px;top:341px;letter-spacing:-0.133px;">Incoming Gateway Data</span><div style="left:1139px;top:366px;width:9px;height:1px;background-image:linear-gradient(90deg,#999 50%,transparent 50%);background-size:2px 1px"></div><svg style="left:1148px;top:357px;" width="18" height="18" viewBox="0 0 24 24"><g transform="translate(1,1) scale(.920)"><path d="M5 1H21Q18 3.500 19 7L21 17H23Q24 23 18 23H3Q6 20.500 5 17L3 7H1Q0 1 5 1Z" fill="#f0b95c"/><path d="M5 1Q8 2 7 7H1Q0 2 5 1ZM18 23Q16 22 17 17H23Q24 22 18 23Z" fill="#d9a040"/><path d="M8.500 5H17M8.500 8H17.500M9 11H18M9.500 14H18.500M10 17H16M10.500 20H16" stroke="#fff" stroke-width="1.300"/></g></svg><span class="t" style="left:1170px;top:359px;letter-spacing:-0.208px;">Macros</span><svg style="left:1132px;top:381px;" width="10" height="7" viewBox="0 0 10 7"><path d="M1 1L5 5L9 1" fill="none" stroke="#333" stroke-width="1.500"/></svg><div style="left:1143px;top:384px;width:5px;height:1px;background-image:linear-gradient(90deg,#999 50%,transparent 50%);background-size:2px 1px"></div><svg style="left:1148px;top:375px;" width="18" height="18" viewBox="0 0 24 24"><rect x="2" y="5" width="20" height="15" fill="#f0b95c"/><path d="M5 13H15M5 16H19" stroke="#7a5a20" stroke-width="1.500"/><rect x="16" y="7" width="4" height="4" fill="#d8482e"/></svg><span class="t" style="left:1170px;top:377px;letter-spacing:-0.141px;">Active Symbols</span><svg style="left:1156px;top:397px;" width="7" height="10" viewBox="0 0 7 10"><path d="M1 1L5 5L1 9" fill="none" stroke="#999" stroke-width="1.300"/></svg><div style="left:1158px;top:402px;width:9px;height:1px;background-image:linear-gradient(90deg,#999 50%,transparent 50%);background-size:2px 1px"></div><svg style="left:1167px;top:393px;" width="18" height="18" viewBox="0 0 24 24"><path d="M5.500 1.500H15L20.500 7V22.500H5.500Z" fill="#fff" stroke="#666" stroke-width="1.200"/><path d="M15 1.500V7H20.500" fill="none" stroke="#666"/><rect x="1" y="10" width="21" height="10" fill="#2f6cb3"/><text x="11.500" y="18.500" font-family="Liberation Sans" font-weight="bold" font-size="9" fill="#fff" text-anchor="middle" textLength="18">CAN</text></svg><span class="t" style="left:1189px;top:395px;letter-spacing:-0.450px;">J1939 Default Database</span><svg style="left:1132px;top:417px;" width="10" height="7" viewBox="0 0 10 7"><path d="M1 1L5 5L9 1" fill="none" stroke="#333" stroke-width="1.500"/></svg><div style="left:1143px;top:420px;width:5px;height:1px;background-image:linear-gradient(90deg,#999 50%,transparent 50%);background-size:2px 1px"></div><svg style="left:1148px;top:411px;" width="18" height="18" viewBox="0 0 24 24"><path d="M2 14Q2 5 7 5Q11 5 12 12Q13 19 17 19Q22 19 22 10" fill="none" stroke="#e2a94f" stroke-width="2.600" stroke-linecap="round"/></svg><span class="t" style="left:1170px;top:413px;letter-spacing:-0.509px;">Signals</span><div style="left:1158px;top:438px;width:9px;height:1px;background-image:linear-gradient(90deg,#999 50%,transparent 50%);background-size:2px 1px"></div><svg style="left:1167px;top:429px;" width="18" height="18" viewBox="0 0 24 24"><path d="M2 14Q2 5 7 5Q11 5 12 12Q13 19 17 19Q22 19 22 10" fill="none" stroke="#e2a94f" stroke-width="2.600" stroke-linecap="round"/></svg><span class="t" style="left:1189px;top:431px;letter-spacing:-0.247px;">2WheelSteerActuatorState</span><div style="left:1158px;top:456px;width:9px;height:1px;background-image:linear-gradient(90deg,#999 50%,transparent 50%);background-size:2px 1px"></div><svg style="left:1167px;top:447px;" width="18" height="18" viewBox="0 0 24 24"><path d="M2 14Q2 5 7 5Q11 5 12 12Q13 19 17 19Q22 19 22 10" fill="none" stroke="#e2a94f" stroke-width="2.600" stroke-linecap="round"/></svg><span class="t" style="left:1189px;top:449px;letter-spacing:-0.247px;">4WheelSteerActuatorState</span><div style="left:1158px;top:474px;width:9px;height:1px;background-image:linear-gradient(90deg,#999 50%,transparent 50%);background-size:2px 1px"></div><svg style="left:1167px;top:465px;" width="18" height="18" viewBox="0 0 24 24"><path d="M2 14Q2 5 7 5Q11 5 12 12Q13 19 17 19Q22 19 22 10" fill="none" stroke="#e2a94f" stroke-width="2.600" stroke-linecap="round"/></svg><span class="t" style="left:1189px;top:467px;letter-spacing:-0.063px;">AboveNominalLevelFrontAxle</span><div style="left:1158px;top:492px;width:9px;height:1px;background-image:linear-gradient(90deg,#999 50%,transparent 50%);background-size:2px 1px"></div><svg style="left:1167px;top:483px;" width="18" height="18" viewBox="0 0 24 24"><path d="M2 14Q2 5 7 5Q11 5 12 12Q13 19 17 19Q22 19 22 10" fill="none" stroke="#e2a94f" stroke-width="2.600" stroke-linecap="round"/></svg><span class="t" style="left:1189px;top:485px;letter-spacing:-0.195px;">AboveNominalLevelRearAxle</span><div style="left:1158px;top:510px;width:9px;height:1px;background-image:linear-gradient(90deg,#999 50%,transparent 50%);background-size:2px 1px"></div><svg style="left:1167px;top:501px;" width="18" height="18" viewBox="0 0 24 24"><path d="M2 14Q2 5 7 5Q11 5 12 12Q13 19 17 19Q22 19 22 10" fill="none" stroke="#e2a94f" stroke-width="2.600" stroke-linecap="round"/></svg><span class="t" style="left:1189px;top:503px;letter-spacing:-0.364px;">ABSEBSAmberWarningSignal</span><div style="left:1158px;top:528px;width:9px;height:1px;background-image:linear-gradient(90deg,#999 50%,transparent 50%);background-size:2px 1px"></div><svg style="left:1167px;top:519px;" width="18" height="18" viewBox="0 0 24 24"><path d="M2 14Q2 5 7 5Q11 5 12 12Q13 19 17 19Q22 19 22 10" fill="none" stroke="#e2a94f" stroke-width="2.600" stroke-linecap="round"/></svg><span class="t" style="left:1189px;top:521px;letter-spacing:-0.244px;">ABSFullyOperational</span><div style="left:1440px;top:211px;width:17px;height:321px;background:#f0f0f0"></div><svg style="left:1444px;top:217px;" width="9" height="6" viewBox="0 0 9 6"><path d="M1 5L4.500 1.500L8 5" fill="none" stroke="#555" stroke-width="1.500"/></svg><svg style="left:1444px;top:522px;" width="9" height="6" viewBox="0 0 9 6"><path d="M1 1L4.500 4.500L8 1" fill="none" stroke="#555" stroke-width="1.500"/></svg><div style="left:1441px;top:229px;width:15px;height:17px;background:#cdcdcd"></div><div style="left:1108px;top:532px;width:349px;height:30px;background:#2a3a5b"></div><svg style="left:1111px;top:535px;" width="16" height="16" viewBox="0 0 24 24"><rect x="4" y="3" width="16" height="14" fill="#fff" stroke="#889"/><rect x="4" y="3" width="16" height="4" fill="#2f6cb3"/><path d="M1 11H9L11 13H20V22H1Z" fill="#c9923a"/><path d="M1 14H20V22H1Z" fill="#f0b95c"/></svg><span class="t" style="left:1132px;top:537px;letter-spacing:-0.651px;color:#e8ecf4;">Project Files</span><div style="left:1198px;top:532px;width:96px;height:22px;background:#fff"></div><svg style="left:1202px;top:535px;" width="16" height="16" viewBox="0 0 24 24"><rect x="2.500" y="3.500" width="18" height="17" fill="#fff" stroke="#778"/><path d="M5 8H11M5 11H11M5 14H9" stroke="#555" stroke-width="1.300"/><circle cx="16" cy="7" r="2.6" fill="#f0b95c"/><path d="M12 7H20M16 3V11M13 4L19 10M19 4L13 10" stroke="#f0b95c" stroke-width="1"/><path d="M14 12L19 15L14 18Z" fill="#8a3aa3"/><rect x="15" y="19" width="5" height="4" fill="#2f6cb3"/></svg><span class="t" style="left:1222px;top:537px;letter-spacing:-0.485px;">Project Items</span>
<div style="left:1108px;top:560px;width:349px;height:22px;background:linear-gradient(#44577f,#3a4c73)"></div><span class="t" style="left:1112px;top:564px;letter-spacing:-0.277px;color:#fff;">Properties</span><svg style="left:1441px;top:565px;" width="12" height="12" viewBox="0 0 12 12"><path d="M2 2L10 10M10 2L2 10" stroke="#fff" stroke-width="1.600"/></svg><div style="left:1108px;top:582px;width:349px;height:25px;background:#bcc8db"></div><div style="left:1110px;top:583px;width:343px;height:22px;background:#fff;border:1px solid #8e9bb0;box-sizing:border-box"></div><span class="t" style="left:1113px;top:587px;letter-spacing:-0.243px;font-weight:bold;">ReceiveMessage</span><span class="t" style="left:1211.5px;top:587px;letter-spacing:-0.382px;">ReceiveMessage Properties</span><svg style="left:1439px;top:591px;" width="11" height="6" viewBox="0 0 11 6"><path d="M0 0H11L5.500 6Z" fill="#111"/></svg><div style="left:1108px;top:607px;width:349px;height:34px;background:#bcc8db"></div><div style="left:1110px;top:609px;width:31px;height:30px;background:#fdf0c8;border:1px solid #ecd48e;box-sizing:border-box"></div><svg style="left:1113px;top:612px;" width="24" height="24" viewBox="0 0 24 24"><rect x="1.500" y="1.500" width="8" height="8" fill="#fff" stroke="#333"/><path d="M3 5.500H8M5.500 3V8" stroke="#111" stroke-width="1.300"/><rect x="1.500" y="13.500" width="8" height="8" fill="#fff" stroke="#333"/><path d="M3 17.500H8M5.500 15V20" stroke="#111" stroke-width="1.300"/><path d="M12 3H20M12 6H23M12 9H21M12 15H20M12 18H23M12 21H21" stroke="#3cae78" stroke-width="1.500"/><path d="M12 6H23M12 18H23" stroke="#8a8" stroke-width="1.500"/></svg><svg style="left:1144px;top:612px;" width="24" height="24" viewBox="0 0 24 24"><text x="0" y="11.500" font-family="Liberation Sans" font-weight="bold" font-size="14.500" fill="#2f6cb3">A</text><text x="0.500" y="24" font-family="Liberation Sans" font-weight="bold" font-size="14.500" fill="#d8482e">Z</text><path d="M17.500 1V21M11.500 14.500L17.500 21.500L23.500 14.500" fill="none" stroke="#444" stroke-width="2.800"/></svg><div style="left:1108px;top:641px;width:349px;height:200px;background:#f0f0f0"></div><div style="left:1108px;top:641px;width:349px;height:195px;background:#fff"></div><div style="left:1108px;top:641px;width:349px;height:181px;background:#f0f0f0"></div><svg style="left:1112px;top:647px;" width="9" height="9" viewBox="0 0 9 9"><rect x="0.500" y="0.500" width="8" height="8" fill="#fff" stroke="#8a8a8a"/><path d="M2 4.500H7" stroke="#333"/></svg><span class="t" style="left:1126.5px;top:645px;letter-spacing:-0.818px;color:#7a7a7a;">CAN</span><div style="left:1124px;top:661px;width:333px;height:19px;background:#fff"></div><div style="left:1287px;top:661px;width:1px;height:19px;background:#f0f0f0"></div><span class="t" style="left:1139.2px;top:665px;letter-spacing:-0.187px;">CAN-ID</span><span class="t" style="left:1290px;top:665px;letter-spacing:-0.720px;color:#6d6d6d;">419326976</span><div style="left:1124px;top:681px;width:333px;height:19px;background:#fff"></div><div style="left:1287px;top:681px;width:1px;height:19px;background:#f0f0f0"></div><span class="t" style="left:1139.2px;top:685px;letter-spacing:-0.264px;">CAN-ID (hex)</span><span class="t" style="left:1290px;top:685px;letter-spacing:-1.038px;color:#6d6d6d;">18FE6C00</span><div style="left:1124px;top:701px;width:333px;height:19px;background:#fff"></div><div style="left:1287px;top:701px;width:1px;height:19px;background:#f0f0f0"></div><span class="t" style="left:1139.2px;top:705px;letter-spacing:-0.218px;">Data Length</span><span class="t" style="left:1290px;top:705px;letter-spacing:-0.173px;color:#6d6d6d;">8</span><div style="left:1124px;top:721px;width:333px;height:19px;background:#fff"></div><div style="left:1287px;top:721px;width:1px;height:19px;background:#f0f0f0"></div><span class="t" style="left:1139.2px;top:725px;letter-spacing:-1.400px;">DLC</span><span class="t" style="left:1290px;top:725px;letter-spacing:-0.173px;color:#6d6d6d;">8</span><div style="left:1124px;top:741px;width:333px;height:19px;background:#fff"></div><div style="left:1287px;top:741px;width:1px;height:19px;background:#f0f0f0"></div><span class="t" style="left:1139.2px;top:745px;letter-spacing:-0.549px;">IsExtended</span><span class="t" style="left:1290px;top:745px;letter-spacing:-0.888px;color:#6d6d6d;">Yes</span><div style="left:1124px;top:761px;width:333px;height:19px;background:#fff"></div><div style="left:1287px;top:761px;width:1px;height:19px;background:#f0f0f0"></div><span class="t" style="left:1139.2px;top:765px;letter-spacing:-1.270px;">IsRTR</span><span class="t" style="left:1290px;top:765px;letter-spacing:-0.039px;color:#6d6d6d;">No</span><svg style="left:1112px;top:787px;" width="9" height="9" viewBox="0 0 9 9"><rect x="0.500" y="0.500" width="8" height="8" fill="#fff" stroke="#8a8a8a"/><path d="M2 4.500H7" stroke="#333"/></svg><span class="t" style="left:1126.5px;top:785px;letter-spacing:-0.321px;color:#7a7a7a;">Misc</span><div style="left:1124px;top:801px;width:333px;height:19px;background:#fff"></div><div style="left:1287px;top:801px;width:1px;height:19px;background:#f0f0f0"></div><span class="t" style="left:1139.2px;top:805px;letter-spacing:-1.139px;">Bus</span><span class="t" style="left:1290px;top:805px;letter-spacing:-0.673px;color:#6d6d6d;">1</span><div style="left:1125px;top:643px;width:27px;height:17px;border:1px dotted #333;box-sizing:border-box"></div><div style="left:1108px;top:836px;width:349px;height:1px;background:#a8a8a8"></div>
<div style="left:0px;top:841px;width:1457px;height:166px;background:#2a3a5b"></div><div style="left:3px;top:838px;width:1100px;height:3px;background:#fdf0cc"></div><div style="left:0px;top:846px;width:21px;height:132px;background:#3d4f77"></div><div style="left:21px;top:846px;width:1436px;height:34px;background:#bcc8db"></div><svg style="left:5px;top:850px;" width="12" height="12" viewBox="0 0 12 12"><path d="M2 2L10 10M10 2L2 10" stroke="#fff" stroke-width="1.600"/></svg><span class="t" style="left:-30px;top:934px;width:80px;text-align:center;transform:rotate(-90deg);color:#fff;letter-spacing:-0.100px">Connections</span><svg style="left:27px;top:851px;" width="24" height="24" viewBox="0 0 24 24"><g transform="translate(-1,-1)"><g transform="rotate(-45 12 12)" fill="none" stroke="#2f6cb3" stroke-width="3.2"><rect x="0.500" y="7.500" width="13" height="9" rx="4.500"/><rect x="10.500" y="7.500" width="13" height="9" rx="4.500"/></g></g><path d="M13.5 19H23.5M18.5 14V24" stroke="#3cae78" stroke-width="3.2"/></svg><span class="t" style="left:54px;top:856px;letter-spacing:-0.211px;">Add...</span><svg style="left:93px;top:851px;" width="24" height="24" viewBox="0 0 24 24"><circle cx="4.500" cy="12" r="4.200" fill="#3a3a3a"/><path d="M9 12H24M17.500 5.500L11.500 12L17.500 18.500" stroke="#3a3a3a" stroke-width="3.200" fill="none"/></svg><span class="t" style="left:120.5px;top:856px;letter-spacing:-0.962px;">Reset</span><div style="left:154px;top:851px;width:1px;height:24px;background:#8f9db4"></div><div style="left:155px;top:851px;width:1px;height:24px;background:#d5dde9"></div><svg style="left:163px;top:851px;" width="24" height="24" viewBox="0 0 24 24"><rect x="3" y="0" width="2.500" height="24" fill="#777"/><path d="M6.500 0.500L20.500 7L6.500 13.500Z" fill="#2f6cb3"/></svg><span class="t" style="left:189.4px;top:856px;letter-spacing:-0.180px">Claim <u>A</u>ddress</span><svg style="left:273px;top:851px;" width="24" height="24" viewBox="0 0 24 24"><rect x="3" y="0" width="2.500" height="24" fill="#9ba8bb"/><path d="M6.500 0.500L20.500 7L6.500 13.500Z" fill="#9ba8bb"/><path d="M14 15L21 22M21 15L14 22" stroke="#9ba8bb" stroke-width="2.400"/></svg><span class="t" style="left:300.3px;top:856px;color:#98a2b3;letter-spacing:-0.450px">Release A<u>d</u>dress</span><div style="left:21px;top:880px;width:1436px;height:98px;background:#fff"></div><span class="t" style="left:55.2px;top:884px;letter-spacing:-1.139px;">Bus</span><span class="t" style="left:91.5px;top:884px;letter-spacing:-0.336px;">Name</span><div style="left:84px;top:882px;width:1px;height:18px;background:#e2e2e2"></div><span class="t" style="left:383.4px;top:884px;letter-spacing:0.011px;">Protocol</span><div style="left:376px;top:882px;width:1px;height:18px;background:#e2e2e2"></div><span class="t" style="left:504.4px;top:884px;letter-spacing:0.055px;">Connection</span><div style="left:497px;top:882px;width:1px;height:18px;background:#e2e2e2"></div><span class="t" style="left:796.4px;top:884px;letter-spacing:-0.484px;">Bit Rate</span><div style="left:789px;top:882px;width:1px;height:18px;background:#e2e2e2"></div><span class="t" style="left:944.6px;top:884px;letter-spacing:-0.624px;">Status</span><div style="left:938px;top:882px;width:1px;height:18px;background:#e2e2e2"></div><span class="t" style="left:1065.3px;top:884px;letter-spacing:-0.278px;">Overruns</span><div style="left:1058px;top:882px;width:1px;height:18px;background:#e2e2e2"></div><span class="t" style="left:1172px;top:884px;letter-spacing:-0.188px;">QXmtFulls</span><div style="left:1165px;top:882px;width:1px;height:18px;background:#e2e2e2"></div><span class="t" style="left:1279px;top:884px;letter-spacing:-0.487px;">Bus Load</span><div style="left:1272px;top:882px;width:1px;height:18px;background:#e2e2e2"></div><div style="left:44px;top:882px;width:1px;height:18px;background:#e2e2e2"></div><div style="left:21px;top:901px;width:1252px;height:19px;background:#d9d9d9"></div><svg style="left:26px;top:904px;" width="13" height="13" viewBox="0 0 13 13"><rect x="0.500" y="0.500" width="12" height="12" fill="#fff" stroke="#333"/><path d="M3 6.500L5.500 9.200L10 3.500" fill="none" stroke="#111" stroke-width="1.700"/></svg><span class="t" style="left:60px;top:904px;width:10px;text-align:center">1</span><svg style="left:86px;top:902px;" width="17" height="17" viewBox="0 0 24 24"><g transform="rotate(-45 12 12)" fill="none" stroke="#2f6cb3" stroke-width="2.7"><rect x="0.500" y="7.500" width="13" height="9" rx="4.500"/><rect x="10.500" y="7.500" width="13" height="9" rx="4.500"/></g></svg><span class="t" style="left:106px;top:904px;letter-spacing:-0.144px;">FMS Connection</span><span class="t" style="left:377.3px;top:904px;letter-spacing:-1.198px;">J1939</span><svg style="left:499px;top:903px;" width="17" height="17" viewBox="0 0 24 24"><path d="M3 11H19" stroke="#2f6cb3" stroke-width="2.600"/><path d="M17.500 6L24 11L17.500 16Z" fill="#2f6cb3"/><circle cx="3.500" cy="11" r="3.200" fill="#2f6cb3"/><path d="M6.500 11L10.500 4.500H14M9.500 11L13.500 17.500H16" fill="none" stroke="#2f6cb3" stroke-width="2.200"/><circle cx="14.500" cy="4.500" r="2.600" fill="#2f6cb3"/><rect x="14.500" y="15" width="5" height="5" fill="#2f6cb3"/></svg><span class="t" style="left:519px;top:904px;letter-spacing:-0.381px;">BlackBox 1 - 500@pcan_usb</span><span class="t" style="left:790.3px;top:904px;letter-spacing:-0.277px;">500 kBit/s</span><span class="t" style="left:938.6px;top:904px;letter-spacing:-1.339px;color:#2e8b2e;">OK</span><span class="t" style="left:1059.3px;top:904px;">0</span><span class="t" style="left:1166.6px;top:904px;">0</span><div style="left:1275px;top:902px;width:178px;height:17px;background:#fff;border:1px solid #e0e0e0;box-sizing:border-box"></div><span class="t" style="left:1351.3px;top:904px;letter-spacing:-0.817px;">3,1%</span><svg style="left:26px;top:923px;" width="13" height="13" viewBox="0 0 13 13"><rect x="0.500" y="0.500" width="12" height="12" fill="#fff" stroke="#333"/></svg><span class="t" style="left:60px;top:923px;width:10px;text-align:center">2</span><svg style="left:86px;top:921px;" width="17" height="17" viewBox="0 0 24 24"><g transform="translate(-1,-1)"><g transform="rotate(-45 12 12)" fill="none" stroke="#2f6cb3" stroke-width="3.0"><rect x="0.500" y="7.500" width="13" height="9" rx="4.500"/><rect x="10.500" y="7.500" width="13" height="9" rx="4.500"/></g></g><circle cx="17.500" cy="17.500" r="5" fill="#fff" stroke="#d8482e" stroke-width="2.200"/><path d="M14 21L21 14" stroke="#d8482e" stroke-width="2.200"/></svg><span class="t" style="left:106px;top:923px;letter-spacing:-0.138px;">CAN FD Connection</span><span class="t" style="left:377.3px;top:923px;letter-spacing:-0.518px;">CAN</span><svg style="left:499px;top:922px;" width="17" height="17" viewBox="0 0 24 24"><path d="M3 11H19" stroke="#2f6cb3" stroke-width="2.600"/><path d="M17.500 6L24 11L17.500 16Z" fill="#2f6cb3"/><circle cx="3.500" cy="11" r="3.200" fill="#2f6cb3"/><path d="M6.500 11L10.500 4.500H14M9.500 11L13.500 17.500H16" fill="none" stroke="#2f6cb3" stroke-width="2.200"/><circle cx="14.500" cy="4.500" r="2.600" fill="#2f6cb3"/><rect x="14.500" y="15" width="5" height="5" fill="#2f6cb3"/></svg><span class="t" style="left:519px;top:923px;letter-spacing:-0.348px;">CAN FD B - 500 &gt; 12M@pcan_usb</span><span class="t" style="left:790.3px;top:923px;letter-spacing:-0.167px;">Nominal 500 kBit/s, Data 1...</span><span class="t" style="left:1059.3px;top:923px;"></span><span class="t" style="left:1166.6px;top:923px;"></span><div style="left:1275px;top:921px;width:178px;height:17px;background:#fff;border:1px solid #e0e0e0;box-sizing:border-box"></div><span class="t" style="left:1351.3px;top:923px;letter-spacing:-0.817px;">0,0%</span><svg style="left:26px;top:942px;" width="13" height="13" viewBox="0 0 13 13"><rect x="0.500" y="0.500" width="12" height="12" fill="#fff" stroke="#333"/><path d="M3 6.500L5.500 9.200L10 3.500" fill="none" stroke="#111" stroke-width="1.700"/></svg><span class="t" style="left:60px;top:942px;width:10px;text-align:center">3</span><svg style="left:86px;top:940px;" width="17" height="17" viewBox="0 0 24 24"><g transform="rotate(-45 12 12)" fill="none" stroke="#2f6cb3" stroke-width="2.7"><rect x="0.500" y="7.500" width="13" height="9" rx="4.500"/><rect x="10.500" y="7.500" width="13" height="9" rx="4.500"/></g></svg><span class="t" style="left:106px;top:942px;letter-spacing:-0.111px;">PCAN-Gateway Connection</span><span class="t" style="left:377.3px;top:942px;letter-spacing:-0.518px;">CAN</span><svg style="left:499px;top:941px;" width="17" height="17" viewBox="0 0 24 24"><rect x="1.500" y="1.500" width="20" height="18" fill="#f4f4f4" stroke="#c4c4c4"/><rect x="4" y="4" width="6" height="5" fill="#b8bcc4"/><rect x="12" y="4" width="7" height="3" fill="#d4d4d4"/><path d="M4 12H12M4 15H9" stroke="#c8c8c8" stroke-width="1.600"/><path d="M13 13L22 22M22 13L13 22" stroke="#d8482e" stroke-width="3.200"/></svg><span class="t" style="left:519px;top:942px;letter-spacing:-0.246px;">WhiteLAN1 - 500@pcan_lan</span><span class="t" style="left:790.3px;top:942px;letter-spacing:-0.277px;">500 kBit/s</span><span class="t" style="left:1059.3px;top:942px;"></span><span class="t" style="left:1166.6px;top:942px;"></span><div style="left:1275px;top:940px;width:178px;height:17px;background:#fff;border:1px solid #e0e0e0;box-sizing:border-box"></div><span class="t" style="left:1351.3px;top:942px;letter-spacing:-0.817px;">0,0%</span><div style="left:1276px;top:903px;width:5px;height:14px;background:#5050e0"></div><div style="left:1338px;top:903px;width:2px;height:14px;background:#d02020"></div><svg style="left:1443px;top:993px;" width="12" height="12" viewBox="0 0 12 12"><path d="M10 1V3M10 5V7M10 9V11M6 5V7M6 9V11M2 9V11" stroke="#aab" stroke-width="2"/></svg>
</div></body></html>
